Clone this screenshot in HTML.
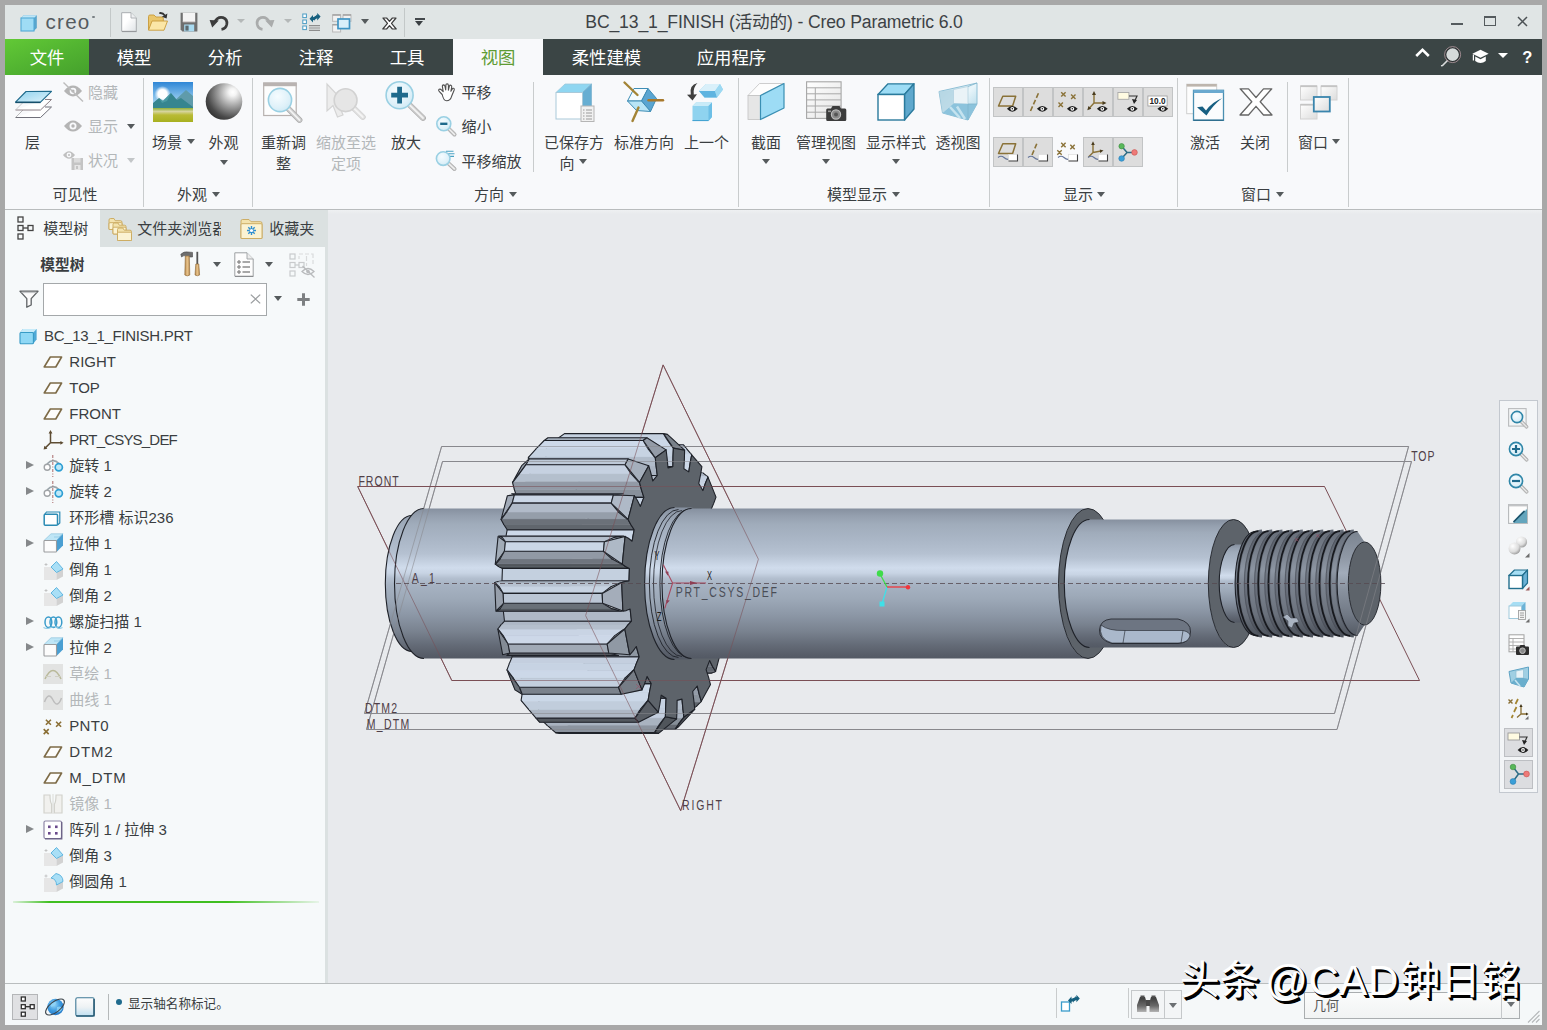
<!DOCTYPE html>
<html lang="zh-CN">
<head>
<meta charset="utf-8">
<title>BC_13_1_FINISH (活动的) - Creo Parametric 6.0</title>
<style>
html,body{margin:0;padding:0}
body{width:1547px;height:1030px;background:#a8a8a8;position:relative;overflow:hidden;
 font-family:"Liberation Sans","Noto Sans CJK SC",sans-serif;font-size:15px;color:#3a3e41;line-height:20px}
div,span,svg{position:absolute;box-sizing:border-box}
svg{overflow:visible}
.t{white-space:nowrap}
.c{white-space:nowrap;transform:translateX(-50%);text-align:center}
.dis{color:#b3b7b9}
#title{left:5px;top:5px;width:1537px;height:34px;background:#e0e5e5}
#tabs{left:5px;top:39px;width:1537px;height:36px;background:#3b4545}
#tabs .tb{color:#fff;font-size:17px;top:8px;line-height:20px;white-space:nowrap}
#ribbon{left:5px;top:75px;width:1537px;height:134px;background:#f8f9fb}
#ribline{left:5px;top:209px;width:1537px;height:1px;background:#b9bcbd}
.sep{width:1px;background:#c9cccd}
.arr{width:0;height:0;border-left:4px solid transparent;border-right:4px solid transparent;border-top:5px solid #555a5c}
.arr.d{border-top-color:#c3c6c8}
.tg{width:30px;height:30px}
.tg.on{background:#dddddd;border:1px solid #c2c4c5}
#ptabs{left:5px;top:210px;width:323px;height:37px;background:#dbe1e1}
#panel{left:5px;top:247px;width:320px;height:736px;background:#f6f9fa}
#sash{left:325px;top:247px;width:3px;height:736px;background:#dbe1e1}
#view{left:328px;top:210px;width:1214px;height:773px;background:#e8eaed}
#status{left:5px;top:983px;width:1537px;height:42px;background:#f5f8f9;border-top:1px solid #b9bdbe}
.row{left:0;width:320px;height:26px}
.row .t{top:3px;line-height:20px}
</style>
</head>
<body>
<div id="title"></div><div id="tabs"></div><div id="ribbon"></div><div id="ribline"></div>
<div id="view"></div>
<div id="ptabs"></div><div id="panel"></div><div id="sash"></div>
<div id="status"></div>
<svg style="left:20px;top:13.5px" width="18" height="18" viewBox="0 0 18 18"><path d="M1,4 L3.5,1.2 L16.8,1.2 L16.8,14 L14,16.8" fill="#5aa5cc"/><path d="M1,4 L3.5,1.2 L16.8,1.2 L14,4Z" fill="#bfe6f7"/><rect x="1" y="4" width="13" height="13" fill="#9fdcf5" stroke="#52aad6" stroke-width="1.1"/></svg>
<div class="t " style="left:45.5px;top:9.5px;font-size:20.6px;line-height:24px;color:#555b5f;letter-spacing:1.25px;">creo</div>
<div style="left:92.2px;top:15.5px;width:2.6px;height:2.6px;border-radius:2px;background:#7a8084"></div>
<div class="sep" style="left:110px;top:8px;height:29px;background:#c3c8c8"></div>
<svg style="left:121px;top:12px" width="16" height="20" viewBox="0 0 16 20"><defs><linearGradient id="ng1" x1="0" y1="0" x2="1" y2="1"><stop offset="0.4" stop-color="#fff"/><stop offset="1" stop-color="#dfe3e6"/></linearGradient></defs><path d="M0.7,0.7 H10 L15.3,6 V19.3 H0.7Z" fill="url(#ng1)" stroke="#a9adb0" stroke-width="1"/><path d="M10,0.7 V6 H15.3" fill="#eef0f2" stroke="#a9adb0" stroke-width="0.9"/><path d="M1,19.6 H15.6" stroke="#8e9295" stroke-width="0.9"/></svg>
<svg style="left:146.5px;top:11px" width="22" height="21" viewBox="0 0 22 21"><path d="M1.5,19 V5.5 Q1.5,4 3,4 H7 L9,6 H15 Q16.3,6 16.3,7.3 V10" fill="#e9c66c" stroke="#c79a3a" stroke-width="0.9"/><path d="M1.5,19.2 L5,10 H20.5 L17,19.2Z" fill="#fbe6a6" stroke="#c79a3a" stroke-width="0.9" stroke-linejoin="round"/><path d="M12.3,1.2 Q16.5,0.6 18.3,3.8 L20.4,2.6 L19.6,7.6 L14.8,5.8 L16.8,4.7 Q15.5,2.7 12.3,3.1Z" fill="#333"/></svg>
<svg style="left:180px;top:12px" width="18" height="20" viewBox="0 0 18 20"><path d="M0.6,0.8 H17.4 V19.4 H2.4 L0.6,17.6Z" fill="#6f6f6f"/><rect x="2.8" y="0.8" width="12.4" height="9" fill="#f4f4f4"/><path d="M2.8,9.8 H15.2" stroke="#d8d0d0" stroke-width="1"/><rect x="4.2" y="12.5" width="10" height="6.9" fill="#a9daf0"/><rect x="5.4" y="13.6" width="3.2" height="5" fill="#5d6a70"/></svg>
<svg style="left:209px;top:13.5px" width="19" height="17" viewBox="0 0 19 17"><path d="M5.5,8.5 Q8.5,2.2 14,3.6 Q18.6,5.2 17.8,10.3 Q17,14.6 12.5,15.3" fill="none" stroke="#3c3c3c" stroke-width="2.7"/><path d="M0.6,6 L9.8,6.6 L3.2,13.5Z" fill="#3c3c3c"/></svg>
<div style="left:237.0px;top:19.1px;width:0;height:0;border-left:4.0px solid transparent;border-right:4.0px solid transparent;border-top:4.5px solid #b4b8b8"></div>
<svg style="left:256px;top:13.5px" width="19" height="17" viewBox="0 0 19 17"><g transform="translate(19,0) scale(-1,1)"><path d="M5.5,8.5 Q8.5,2.2 14,3.6 Q18.6,5.2 17.8,10.3 Q17,14.6 12.5,15.3" fill="none" stroke="#a9abab" stroke-width="2.7"/><path d="M0.6,6 L9.8,6.6 L3.2,13.5Z" fill="#a9abab"/></g></svg>
<div style="left:284.0px;top:19.1px;width:0;height:0;border-left:4.0px solid transparent;border-right:4.0px solid transparent;border-top:4.5px solid #b4b8b8"></div>
<svg style="left:301.5px;top:11px" width="19" height="21" viewBox="0 0 19 21"><rect x="0.8" y="3" width="3.6" height="3.6" fill="#fff" stroke="#4a9cc4" stroke-width="1"/><rect x="0.8" y="9" width="3.6" height="3.6" fill="#fff" stroke="#4a9cc4" stroke-width="1"/><rect x="0.8" y="15" width="3.6" height="3.6" fill="#fff" stroke="#4a9cc4" stroke-width="1"/><path d="M7,17 H18 M7,19.4 H18 M7,14.6 H18" stroke="#8d8d8d" stroke-width="1.1"/><path d="M7.5,7.8 L11,4 L11,6.2 Q14,5.6 15,3.4 Q15.2,8.4 11,9.2 L11,11.4Z" fill="#16607f"/><path d="M18.6,5.2 L15.2,9 L15.2,6.8 Q12.6,7.6 12,9.6 Q11.4,4.6 15.2,3.8 L15.2,1.6Z" fill="#16607f" transform="translate(0,0.4)"/></svg>
<svg style="left:331.5px;top:13.5px" width="20" height="19" viewBox="0 0 20 19"><rect x="0.6" y="0.8" width="8" height="6.5" fill="#f2f2f2" stroke="#b9b9b9"/><rect x="11" y="0.8" width="8" height="6.5" fill="#f2f2f2" stroke="#b9b9b9"/><rect x="0.6" y="10.5" width="8" height="7.5" fill="#f2f2f2" stroke="#b9b9b9"/><path d="M0.6,1 H8.6 M11,1 H19 M0.6,10.7 H8.6" stroke="#a2a2a2" stroke-width="1.4"/><rect x="6" y="5" width="11.5" height="9.6" fill="#d9effa" stroke="#3f94c4" stroke-width="1.7"/></svg>
<div style="left:360.6px;top:19.0px;width:0;height:0;border-left:4.25px solid transparent;border-right:4.25px solid transparent;border-top:5.4px solid #555a5c"></div>
<svg style="left:382px;top:16.5px" width="15" height="13" viewBox="0 0 15 13"><path d="M1,1 H4.6 L7.5,4.4 L10.4,1 H14 L9.5,6.4 L14.2,12 H10.4 L7.5,8.6 L4.6,12 H0.8 L5.5,6.4Z" fill="#fff" stroke="#3a3a3a" stroke-width="1.2" stroke-linejoin="round"/></svg>
<div class="sep" style="left:404px;top:8px;height:29px;background:#c3c8c8"></div>
<div style="left:414.5px;top:18px;width:10px;height:1.6px;background:#44494c"></div>
<div style="left:414.8px;top:20.5px;width:0;height:0;border-left:4.75px solid transparent;border-right:4.75px solid transparent;border-top:5.6px solid #3a3f42"></div>
<div class="c " style="left:774px;top:10.0px;font-size:17.6px;line-height:24px;color:#3d4245;letter-spacing:-0.14px;">BC_13_1_FINISH (活动的) - Creo Parametric 6.0</div>
<div style="left:1451px;top:22.6px;width:11.5px;height:2px;background:#555b5e"></div>
<div style="left:1484px;top:16px;width:12.2px;height:10px;border:1.2px solid #555b5e;border-top:2.6px solid #555b5e"></div>
<svg style="left:1517px;top:16px" width="11" height="11" viewBox="0 0 11 11"><path d="M1,1 L10,10 M10,1 L1,10" stroke="#4c5255" stroke-width="1.5"/></svg>
<div style="left:5px;top:39px;width:84px;height:36px;background:linear-gradient(160deg,#62c936 0%,#52b431 50%,#45a02c 100%)"></div>
<div style="left:453px;top:39px;width:90px;height:37px;background:#f8f9fb"></div>
<div class="t " style="left:29.7px;top:46.7px;font-size:17.4px;line-height:22px;color:#fff;">文件</div>
<div class="t " style="left:116.7px;top:46.7px;font-size:17.4px;line-height:22px;color:#fff;">模型</div>
<div class="t " style="left:207.7px;top:46.7px;font-size:17.4px;line-height:22px;color:#fff;">分析</div>
<div class="t " style="left:298.7px;top:46.7px;font-size:17.4px;line-height:22px;color:#fff;">注释</div>
<div class="t " style="left:389.7px;top:46.7px;font-size:17.4px;line-height:22px;color:#fff;">工具</div>
<div class="t " style="left:480.7px;top:46.7px;font-size:17.4px;line-height:22px;color:#5f9c33;">视图</div>
<div class="t " style="left:571.7px;top:46.7px;font-size:17.4px;line-height:22px;color:#fff;">柔性建模</div>
<div class="t " style="left:696.7px;top:46.7px;font-size:17.4px;line-height:22px;color:#fff;">应用程序</div>
<svg style="left:1415px;top:47.5px" width="15" height="9" viewBox="0 0 15 9"><path d="M1.2,8 L7.5,1.8 L13.8,8" fill="none" stroke="#fff" stroke-width="2.6" stroke-linejoin="miter"/></svg>
<svg style="left:1439.5px;top:45.5px" width="22" height="22" viewBox="0 0 22 22"><path d="M8.5,13.5 L2.5,19.5 L1,19.8" stroke="#d9dcdc" stroke-width="1.6" fill="none"/><circle cx="12.6" cy="8.6" r="7" fill="#d5dada" stroke="#2d3334" stroke-width="1.4"/><circle cx="12.6" cy="8.6" r="8" fill="none" stroke="#c9a9b0" stroke-width="0.7"/></svg>
<svg style="left:1471.5px;top:48.5px" width="17" height="15" viewBox="0 0 17 15"><path d="M8.5,0.8 L16.6,4.8 L8.5,8.8 L0.4,4.8Z" fill="#fff"/><path d="M3.2,7.4 V12 Q8.5,15.8 13.8,12 V7.4 L8.5,10.2Z" fill="#fff"/><path d="M1.4,5.5 V11.5" stroke="#fff" stroke-width="1.2"/></svg>
<div style="left:1497.5px;top:53.0px;width:0;height:0;border-left:5.5px solid transparent;border-right:5.5px solid transparent;border-top:5.6px solid #fff"></div>
<div class="c " style="left:1527.3px;top:45.7px;font-size:16.5px;line-height:22px;color:#fff;font-weight:700;">?</div>
<svg style="left:14px;top:90px" width="40" height="30" viewBox="0 0 40 30"><defs><linearGradient id="lyg2" x1="0" y1="0" x2="1" y2="1"><stop offset="0" stop-color="#8fd2ee"/><stop offset="1" stop-color="#dff2fa"/></linearGradient></defs><path d="M1.5,27.5 L26.5,27.5 L37.5,17 L31,17" fill="#fff" stroke="#70707a" stroke-width="1"/><path d="M1.5,27.5 L12,17" stroke="#aaa" stroke-width="0.8"/><path d="M1.5,20 L26.5,20 L37.5,9.5 L31,9.5" fill="#fff" stroke="#8c8086" stroke-width="1"/><path d="M1.5,20 L12,9.5" stroke="#bbb" stroke-width="0.8"/><path d="M1.5,12.2 L12,1.5 L37.5,1.3 L26.5,12.2 Z" fill="url(#lyg2)" stroke="#1f6a8c" stroke-width="1.1" stroke-linejoin="round"/><path d="M1.5,12.4 L26.5,12.4" stroke="#174f6b" stroke-width="1.5"/></svg>
<div class="c " style="left:32.5px;top:133.0px;">层</div>
<svg style="left:62px;top:82px" width="22" height="20" viewBox="0 0 22 20"><path d="M2,9 Q11,-1.8000000000000007 20,9 Q11,19.8 2,9Z" fill="#b4b4b4"/><circle cx="11" cy="9" r="3.3" fill="#f8f9fb"/><circle cx="11" cy="9" r="1.6" fill="#b4b4b4"/><path d="M1.5,0.5 L21,19.5" stroke="#bcbcbc" stroke-width="1.4"/></svg>
<div class="t dis" style="left:88px;top:83.0px;">隐藏</div>
<svg style="left:63px;top:119px" width="20" height="14" viewBox="0 0 20 14"><path d="M1,7 Q10,-4.199999999999999 19,7 Q10,18.2 1,7Z" fill="#b4b4b4"/><circle cx="10" cy="7" r="3.5" fill="#f8f9fb"/><circle cx="10" cy="7" r="1.7" fill="#b4b4b4"/></svg>
<div class="t dis" style="left:88px;top:117.0px;">显示</div>
<div style="left:127.0px;top:123.8px;width:0;height:0;border-left:4.0px solid transparent;border-right:4.0px solid transparent;border-top:5px solid #555a5c"></div>
<svg style="left:62px;top:149px" width="22" height="22" viewBox="0 0 22 22"><path d="M1,6 Q7,-1.5999999999999996 13,6 Q7,13.6 1,6Z" fill="#c0c0c0"/><circle cx="7" cy="6" r="2.4" fill="#f8f9fb"/><circle cx="7" cy="6" r="1.1" fill="#c0c0c0"/><path d="M9.5,9 H21 V21 H9.5Z" fill="#c4c4c4"/><rect x="12" y="9" width="6.5" height="4.5" fill="#dcdcdc"/><rect x="12.5" y="16" width="6" height="5" fill="#e6e6e6"/><rect x="14" y="17" width="2" height="3" fill="#c4c4c4"/></svg>
<div class="t dis" style="left:88px;top:151.0px;">状况</div>
<div style="left:127.0px;top:157.8px;width:0;height:0;border-left:4.0px solid transparent;border-right:4.0px solid transparent;border-top:5px solid #c3c6c8"></div>
<div class="c " style="left:75px;top:184.5px;">可见性</div>
<div class="sep" style="left:143px;top:78px;height:129px;background:#c9cccd"></div>
<svg style="left:153px;top:82px" width="40" height="40" viewBox="0 0 40 40"><defs><linearGradient id="sky3" x1="0" y1="0" x2="0" y2="1"><stop offset="0" stop-color="#2f86d6"/><stop offset="0.5" stop-color="#7dbbe9"/><stop offset="1" stop-color="#c4e2f4"/></linearGradient><linearGradient id="gnd3" x1="0" y1="0" x2="0" y2="1"><stop offset="0" stop-color="#8fae3a"/><stop offset="0.25" stop-color="#d6d49c"/><stop offset="0.5" stop-color="#b9bb35"/><stop offset="1" stop-color="#a8b020"/></linearGradient><radialGradient id="sun3"><stop offset="0" stop-color="#fff"/><stop offset="0.55" stop-color="#fff"/><stop offset="1" stop-color="#fff" stop-opacity="0"/></radialGradient></defs><rect width="40" height="27" fill="url(#sky3)"/><circle cx="9.5" cy="12" r="8" fill="url(#sun3)"/><path d="M18,22 L33,8 L40,14 L40,26 L18,26Z" fill="#5f9bab"/><path d="M0,21 L6,16 L10,19 L18,11 L24,18 L28,16 L40,25 L40,27 L0,27Z" fill="#36858f"/><path d="M6,16 L10,19 L18,11 L14,19 L9,21Z" fill="#4a9aa2"/><rect y="26" width="40" height="14" fill="url(#gnd3)"/></svg>
<div class="t " style="left:152px;top:133.0px;">场景</div>
<div style="left:186.5px;top:139.3px;width:0;height:0;border-left:4.0px solid transparent;border-right:4.0px solid transparent;border-top:5px solid #555a5c"></div>
<svg style="left:204.5px;top:82px" width="38" height="38" viewBox="0 0 38 38"><defs><radialGradient id="sph4" cx="0.72" cy="0.28" r="0.85" fx="0.74" fy="0.24"><stop offset="0" stop-color="#fff"/><stop offset="0.12" stop-color="#f4f4f4"/><stop offset="0.45" stop-color="#a0a0a0"/><stop offset="0.8" stop-color="#4a4a4a"/><stop offset="1" stop-color="#2e2e2e"/></radialGradient></defs><circle cx="19" cy="19.5" r="18.3" fill="url(#sph4)"/></svg>
<div class="c " style="left:223.5px;top:133.0px;">外观</div>
<div style="left:220.0px;top:159.5px;width:0;height:0;border-left:4.0px solid transparent;border-right:4.0px solid transparent;border-top:5px solid #555a5c"></div>
<div class="t " style="left:177px;top:184.5px;">外观</div>
<div style="left:212.0px;top:191.5px;width:0;height:0;border-left:4.0px solid transparent;border-right:4.0px solid transparent;border-top:5px solid #555a5c"></div>
<div class="sep" style="left:252px;top:78px;height:129px;background:#c9cccd"></div>
<svg style="left:263px;top:82px" width="40" height="40" viewBox="0 0 40 40"><defs><radialGradient id="lens5" cx="0.4" cy="0.35" r="0.8"><stop offset="0" stop-color="#f6fcff"/><stop offset="0.6" stop-color="#dff1f9"/><stop offset="1" stop-color="#c7e6f3"/></radialGradient></defs><rect x="0.7" y="1" width="32.5" height="32.5" fill="#fdfdfd" stroke="#b7b1af" stroke-width="1.2"/><rect x="0.2" y="0.6" width="33.5" height="3.6" fill="#b9b3b1"/><path d="M25.4,26.7 L36.5,38" stroke="#a9a9a9" stroke-width="5.8" stroke-linecap="round"/><path d="M25.4,26.7 L36.5,38" stroke="#c9c9c9" stroke-width="4.6" stroke-linecap="round"/><path d="M25.4,26.7 L36.5,38" stroke="#f2f2f2" stroke-width="1.8" stroke-linecap="round"/><circle cx="17" cy="18" r="11.6" fill="url(#lens5)" stroke="#9ad0e3" stroke-width="1.6"/></svg>
<div class="c " style="left:283.5px;top:133.0px;">重新调</div>
<div class="c " style="left:283.5px;top:154.1px;">整</div>
<svg style="left:326px;top:82px" width="40" height="40" viewBox="0 0 40 40"><path d="M1,2 L1,29 L7,23.5 L11.5,35 L17,33 L12.5,21.5 L19,21Z" fill="#ececec" stroke="#d4d4d4" stroke-width="1.2"/><path d="M28.1,26.5 L36.8,35" stroke="#cfcfcf" stroke-width="5.8" stroke-linecap="round"/><path d="M28.1,26.5 L36.8,35" stroke="#dedede" stroke-width="4.6" stroke-linecap="round"/><path d="M28.1,26.5 L36.8,35" stroke="#f4f4f4" stroke-width="1.8" stroke-linecap="round"/><circle cx="19.6" cy="18.2" r="11.4" fill="#e6e6e6" stroke="#d2d2d2" stroke-width="1.6"/></svg>
<div class="c dis" style="left:346px;top:133.0px;">缩放至选</div>
<div class="c dis" style="left:346px;top:154.1px;">定项</div>
<svg style="left:385px;top:81px" width="40" height="40" viewBox="0 0 40 40"><defs><radialGradient id="lens6" cx="0.4" cy="0.35" r="0.8"><stop offset="0" stop-color="#f6fcff"/><stop offset="0.6" stop-color="#dff1f9"/><stop offset="1" stop-color="#c7e6f3"/></radialGradient></defs><path d="M24.6,24.0 L38,37" stroke="#a9a9a9" stroke-width="5.8" stroke-linecap="round"/><path d="M24.6,24.0 L38,37" stroke="#c9c9c9" stroke-width="4.6" stroke-linecap="round"/><path d="M24.6,24.0 L38,37" stroke="#f2f2f2" stroke-width="1.8" stroke-linecap="round"/><circle cx="14.6" cy="14.2" r="13.5" fill="url(#lens6)" stroke="#9ad0e3" stroke-width="1.6"/><path d="M6.2,14.2 H23 M14.6,5.8 V22.6" stroke="#1f6a8c" stroke-width="4.8"/></svg>
<div class="c " style="left:406px;top:133.0px;">放大</div>
<svg style="left:437.3px;top:83px" width="18" height="19" viewBox="0 0 18 19"><path d="M5.2,11.5 L2.4,8.6 Q1,7.2 2.2,6.3 Q3.3,5.6 4.6,7 L6.2,8.6 L5.4,3.6 Q5.2,2 6.5,1.9 Q7.7,1.9 8,3.4 L8.7,7 L8.9,2.3 Q9,0.8 10.2,0.9 Q11.4,1 11.4,2.5 L11.4,7.2 L12.4,3.2 Q12.8,1.9 13.9,2.2 Q15,2.6 14.7,4 L13.9,8.3 L15.3,5.9 Q16,4.8 16.9,5.4 Q17.7,6 17.1,7.3 L14.6,13.3 Q13.4,17.6 9.6,17.8 Q6.6,17.8 5.2,11.5Z" fill="#fff" stroke="#505050" stroke-width="1.1" stroke-linejoin="round"/></svg>
<div class="t " style="left:461.5px;top:83.0px;">平移</div>
<svg style="left:436px;top:116px" width="20" height="20" viewBox="0 0 20 20"><defs><radialGradient id="lens7" cx="0.4" cy="0.35" r="0.8"><stop offset="0" stop-color="#f6fcff"/><stop offset="0.6" stop-color="#dff1f9"/><stop offset="1" stop-color="#c7e6f3"/></radialGradient></defs><path d="M13.1,13.1 L18.5,18.5" stroke="#a9a9a9" stroke-width="4.0" stroke-linecap="round"/><path d="M13.1,13.1 L18.5,18.5" stroke="#c9c9c9" stroke-width="2.8" stroke-linecap="round"/><path d="M13.1,13.1 L18.5,18.5" stroke="#f2f2f2" stroke-width="1.1" stroke-linecap="round"/><circle cx="7.8" cy="7.8" r="7" fill="url(#lens7)" stroke="#9ad0e3" stroke-width="1.6"/><path d="M4.2,7.8 H11.4" stroke="#1f6a8c" stroke-width="2.4"/></svg>
<div class="t " style="left:461.5px;top:117.0px;">缩小</div>
<svg style="left:436px;top:149.5px" width="20" height="20" viewBox="0 0 20 20"><defs><radialGradient id="lens8" cx="0.4" cy="0.35" r="0.8"><stop offset="0" stop-color="#f6fcff"/><stop offset="0.6" stop-color="#dff1f9"/><stop offset="1" stop-color="#c7e6f3"/></radialGradient></defs><path d="M12.6,13.5 L18.5,19" stroke="#a9a9a9" stroke-width="4.0" stroke-linecap="round"/><path d="M12.6,13.5 L18.5,19" stroke="#c9c9c9" stroke-width="2.8" stroke-linecap="round"/><path d="M12.6,13.5 L18.5,19" stroke="#f2f2f2" stroke-width="1.1" stroke-linecap="round"/><circle cx="7.2" cy="8.6" r="6.8" fill="url(#lens8)" stroke="#9ad0e3" stroke-width="1.6"/><path d="M10,1.2 H17.5 M12.5,3.8 H18.5 M14.2,6.4 H18" stroke="#4aa3c4" stroke-width="1.1"/></svg>
<div class="t " style="left:461.5px;top:151.5px;">平移缩放</div>
<div class="sep" style="left:533px;top:82px;height:90px;background:#c9cccd"></div>
<svg style="left:555px;top:83px" width="40" height="40" viewBox="0 0 40 40"><path d="M1,9.5 L10,1 L36.5,1 L27.5,9.5Z" fill="#8fd6f1" stroke="#9cc9dd" stroke-width="0.8"/><path d="M27.5,9.5 L36.5,1 L36.5,27.5 L27.5,36Z" fill="#67aed2" stroke="#7fb5d0" stroke-width="0.8"/><rect x="1" y="9.5" width="26.5" height="26.5" fill="#fff" stroke="#a9c9d9" stroke-width="1"/><rect x="26" y="23" width="13" height="15.5" fill="#f1f1f1" stroke="#b5b5b5" stroke-width="1"/><path d="M28,27 h1.5 M31,27 h6 M28,30 h1.5 M31,30 h6 M28,33 h1.5 M31,33 h6 M28,36 h1.5 M31,36 h6" stroke="#9a9a9a" stroke-width="1"/></svg>
<div class="c " style="left:574px;top:133.0px;">已保存方</div>
<div class="c " style="left:567px;top:154.1px;">向</div>
<div style="left:579.0px;top:159.0px;width:0;height:0;border-left:4.0px solid transparent;border-right:4.0px solid transparent;border-top:5px solid #555a5c"></div>
<svg style="left:623px;top:81px" width="42" height="42" viewBox="0 0 42 42"><path d="M4.5,20 L11,7.5 L25,7.5 L18.5,20Z" fill="#f4fbfe" stroke="#3e8db5" stroke-width="1"/><path d="M18.5,20 L25,7.5 L33.5,17.5 L27.5,30.5Z" fill="#5aa5d1" stroke="#3e8db5" stroke-width="1"/><path d="M4.5,20 L18.5,20 L27.5,30.5 L13.5,29.5Z" fill="#b9e5f6" stroke="#3e8db5" stroke-width="1"/><path d="M1.5,1.5 L14.5,14" stroke="#a38436" stroke-width="2.4" stroke-linecap="round"/><path d="M25.5,19.3 L40,19.3" stroke="#a8792c" stroke-width="2.4" stroke-linecap="round"/><path d="M15.5,26.5 L9.5,40" stroke="#a38436" stroke-width="2.4" stroke-linecap="round"/></svg>
<div class="c " style="left:644px;top:133.0px;">标准方向</div>
<svg style="left:686px;top:82px" width="38" height="40" viewBox="0 0 38 40"><path d="M11.5,1 Q3,3 4.8,12.5 L1,12.8 L6.5,18.5 L11,12.2 L7.8,12.4 Q6.8,5.5 11.5,1Z" fill="#3f3f3f"/><path d="M13,9 L20,2 L34,2 L37,7.5 L31,15.5 L18.5,15.5Z" fill="#8fd3ef"/><path d="M13,9 L20,2 L34,2 L29,9Z" fill="#d9f0fa"/><path d="M13,9 L29,9 L31,15.5 L18.5,15.5Z" fill="#5fb4e0"/><path d="M29,9 L34,2 L37,7.5 L31,15.5Z" fill="#9dd9f2"/><path d="M6.5,24 L10,20.5 L26,20.5 L26,35 L22.5,39 L6.5,39Z" fill="#8fd3ef"/><path d="M6.5,24 L10,20.5 L26,20.5 L22.5,24Z" fill="#c9ebf8"/><path d="M22.5,24 L26,20.5 L26,35 L22.5,39Z" fill="#6dbfe6"/><path d="M6.5,38.6 H22.5" stroke="#3e9fcf" stroke-width="1"/></svg>
<div class="c " style="left:706.5px;top:133.0px;">上一个</div>
<div class="t " style="left:474px;top:184.5px;">方向</div>
<div style="left:509.0px;top:191.5px;width:0;height:0;border-left:4.0px solid transparent;border-right:4.0px solid transparent;border-top:5px solid #555a5c"></div>
<div class="sep" style="left:738px;top:78px;height:129px;background:#c9cccd"></div>
<svg style="left:747px;top:82px" width="38" height="38" viewBox="0 0 38 38"><path d="M1,13.5 L12.5,1.5 L37,1.5 L13.5,13.5Z" fill="#fdfdfd" stroke="#c2c2c2" stroke-width="0.8"/><rect x="1" y="13.5" width="12.5" height="24" fill="#e6e6e6" stroke="#c2c2c2" stroke-width="0.8"/><path d="M13.5,13.5 L37,1.5 L37,26 L13.5,37.5Z" fill="#9ddcf5" stroke="#3a8fb3" stroke-width="1.2" stroke-linejoin="round"/></svg>
<div class="c " style="left:766px;top:133.0px;">截面</div>
<div style="left:762.0px;top:159.0px;width:0;height:0;border-left:4.0px solid transparent;border-right:4.0px solid transparent;border-top:5px solid #555a5c"></div>
<svg style="left:806px;top:81px" width="41" height="41" viewBox="0 0 41 41"><defs><linearGradient id="tbl9" x1="0" y1="0" x2="1" y2="1"><stop offset="0" stop-color="#fff"/><stop offset="1" stop-color="#e4e4e4"/></linearGradient></defs><rect x="0.6" y="0.8" width="34.5" height="36.6" fill="url(#tbl9)" stroke="#a6a6a6" stroke-width="1.1"/><path d="M0.6,6.8 H35 M0.6,12.8 H35 M0.6,18.9 H35 M0.6,25 H35 M0.6,31.2 H35 M9.3,6.8 V37.4" stroke="#a9a9a9" stroke-width="1"/><path d="M21.5,27.5 H25 L26.5,25 H33.5 L35,27.5 H39 Q40.3,27.5 40.3,29 V38.5 Q40.3,40 39,40 H21.5 Q20.2,40 20.2,38.5 V29 Q20.2,27.5 21.5,27.5Z" fill="#3c3c3c"/><circle cx="30" cy="33.5" r="4.6" fill="#8a8a8a" stroke="#bdbdbd" stroke-width="1.2"/><circle cx="30" cy="33.5" r="2" fill="#555"/><rect x="22" y="29.5" width="3" height="1.6" fill="#9a9a9a"/></svg>
<div class="c " style="left:826px;top:133.0px;">管理视图</div>
<div style="left:822.0px;top:159.0px;width:0;height:0;border-left:4.0px solid transparent;border-right:4.0px solid transparent;border-top:5px solid #555a5c"></div>
<svg style="left:877px;top:82.5px" width="38" height="38" viewBox="0 0 38 38"><path d="M1,11.5 L11,0.8 L37,0.8 L27.5,11.5Z" fill="#9ddcf5" stroke="#2a7a9c" stroke-width="1.3" stroke-linejoin="round"/><path d="M27.5,11.5 L37,0.8 L37,26 L27.5,37Z" fill="#5fa8cd" stroke="#2a7a9c" stroke-width="1.3" stroke-linejoin="round"/><rect x="1" y="11.5" width="26.5" height="25.5" fill="#fff" stroke="#2a7a9c" stroke-width="1.4"/></svg>
<div class="c " style="left:896px;top:133.0px;">显示样式</div>
<div style="left:892.0px;top:159.0px;width:0;height:0;border-left:4.0px solid transparent;border-right:4.0px solid transparent;border-top:5px solid #555a5c"></div>
<svg style="left:938px;top:82px" width="40" height="40" viewBox="0 0 40 40"><defs><linearGradient id="psg10" x1="0" y1="0" x2="1" y2="1"><stop offset="0" stop-color="#b5d9e8"/><stop offset="0.5" stop-color="#e9f5fa"/><stop offset="1" stop-color="#9fcfe3"/></linearGradient></defs><path d="M1,9.5 L39,1 L39,22 L30,38 L4.5,31Z" fill="url(#psg10)" stroke="#8fc0d6" stroke-width="1"/><path d="M15.5,7.5 L30,4.5 L30,22 L15.5,21.5Z" fill="#eaf3f7" stroke="#b4d2df" stroke-width="0.8"/><path d="M1,9.5 L15.5,7.5 L15.5,21.5 L4.5,31Z" fill="#b3d4e2" fill-opacity="0.8"/><path d="M4.5,31 L15.5,21.5 L30,22 L39,22 L30,38Z" fill="#8cc3dc"/><path d="M12,25 L22,36 M19,24.5 L27,37" stroke="#c5e3ef" stroke-width="2.5"/><path d="M30,4.5 L39,1 M30,22 L39,22 M30,22 L30,38" stroke="#7fb4cc" stroke-width="0.8" fill="none"/></svg>
<div class="c " style="left:958px;top:133.0px;">透视图</div>
<div class="t " style="left:827px;top:184.5px;">模型显示</div>
<div style="left:892.0px;top:191.5px;width:0;height:0;border-left:4.0px solid transparent;border-right:4.0px solid transparent;border-top:5px solid #555a5c"></div>
<div class="sep" style="left:989px;top:78px;height:129px;background:#c9cccd"></div>
<div class="tg on" style="left:993px;top:87px"></div>
<svg style="left:993px;top:87px" width="30" height="30" viewBox="0 0 30 30"><path d="M5.5,19 L9.8,9.2 L22.7,9.2 L19.6,19Z" fill="none" stroke="#8a7238" stroke-width="1.5" stroke-linejoin="round"/><path d="M13.9,21.8 Q19.3,16.0 24.700000000000003,21.8 Q19.3,27.6 13.9,21.8Z" fill="#1e1e1e"/><circle cx="19.3" cy="21.8" r="1.9" fill="#fff"/><circle cx="19.3" cy="21.8" r="0.8" fill="#1e1e1e"/></svg>
<div class="tg on" style="left:1023px;top:87px"></div>
<svg style="left:1023px;top:87px" width="30" height="30" viewBox="0 0 30 30"><path d="M7.5,24 L16,5" stroke="#8a7238" stroke-width="1.6" stroke-dasharray="5,2.2"/><path d="M13.9,21.8 Q19.3,16.0 24.700000000000003,21.8 Q19.3,27.6 13.9,21.8Z" fill="#1e1e1e"/><circle cx="19.3" cy="21.8" r="1.9" fill="#fff"/><circle cx="19.3" cy="21.8" r="0.8" fill="#1e1e1e"/></svg>
<div class="tg on" style="left:1053px;top:87px"></div>
<svg style="left:1053px;top:87px" width="30" height="30" viewBox="0 0 30 30"><path d="M8.2,5.2 L12.600000000000001,9.600000000000001 M12.600000000000001,5.2 L8.2,9.600000000000001 M18.1,7.6000000000000005 L22.5,12.0 M22.5,7.6000000000000005 L18.1,12.0 M5.5,15.600000000000001 L9.9,20.0 M9.9,15.600000000000001 L5.5,20.0" stroke="#8a7238" stroke-width="1.4"/><path d="M13.9,21.8 Q19.3,16.0 24.700000000000003,21.8 Q19.3,27.6 13.9,21.8Z" fill="#1e1e1e"/><circle cx="19.3" cy="21.8" r="1.9" fill="#fff"/><circle cx="19.3" cy="21.8" r="0.8" fill="#1e1e1e"/></svg>
<div class="tg on" style="left:1083px;top:87px"></div>
<svg style="left:1083px;top:87px" width="30" height="30" viewBox="0 0 30 30"><path d="M11,16 L11,6.5 M11,16 L21,16 M11,16 L6,21.5" stroke="#8a7238" stroke-width="1.4" fill="none"/><path d="M11,4 L9,8 L13,8Z M23.5,16 L19.5,14 L19.5,18Z M4.3,23.2 L5.5,19 L8.3,21.8Z" fill="#4a3c1e"/><path d="M13.9,21.8 Q19.3,16.0 24.700000000000003,21.8 Q19.3,27.6 13.9,21.8Z" fill="#1e1e1e"/><circle cx="19.3" cy="21.8" r="1.9" fill="#fff"/><circle cx="19.3" cy="21.8" r="0.8" fill="#1e1e1e"/></svg>
<div class="tg on" style="left:1113px;top:87px"></div>
<svg style="left:1113px;top:87px" width="30" height="30" viewBox="0 0 30 30"><rect x="4.9" y="5.5" width="11" height="6.8" fill="#fffbe2" stroke="#a8a8a8" stroke-width="0.9"/><path d="M16,9 H24 L21.5,14.5" fill="none" stroke="#333" stroke-width="1.2"/><path d="M19,12 L24,13 L21,17Z" fill="#222"/><path d="M13.9,21.8 Q19.3,16.0 24.700000000000003,21.8 Q19.3,27.6 13.9,21.8Z" fill="#1e1e1e"/><circle cx="19.3" cy="21.8" r="1.9" fill="#fff"/><circle cx="19.3" cy="21.8" r="0.8" fill="#1e1e1e"/></svg>
<div class="tg on" style="left:1143px;top:87px"></div>
<svg style="left:1143px;top:87px" width="30" height="30" viewBox="0 0 30 30"><rect x="4.9" y="9" width="19.2" height="10" fill="#fff" stroke="#9a9a9a" stroke-width="0.8"/><text x="14.5" y="17" font-family="Liberation Sans, sans-serif" font-size="8.5" font-weight="700" text-anchor="middle" fill="#222" textLength="16" lengthAdjust="spacingAndGlyphs">10.0</text><path d="M14.4,21.8 Q19.8,16.0 25.200000000000003,21.8 Q19.8,27.6 14.4,21.8Z" fill="#1e1e1e"/><circle cx="19.8" cy="21.8" r="1.9" fill="#fff"/><circle cx="19.8" cy="21.8" r="0.8" fill="#1e1e1e"/></svg>
<div class="tg on" style="left:993px;top:137px"></div>
<svg style="left:993px;top:137px" width="30" height="30" viewBox="0 0 30 30"><path d="M5.5,16.5 L9.8,6.7 L22.7,6.7 L19.6,16.5Z" fill="none" stroke="#8a7238" stroke-width="1.5" stroke-linejoin="round"/><path d="M5,20.5 Q8,18 11,20.5 T16,22" fill="none" stroke="#66769a" stroke-width="1.2"/><rect x="15.5" y="17.5" width="9" height="6.5" fill="#fff" stroke="#d8d8d8" stroke-width="0.6"/><path d="M15.5,24 H24.5 V17.5" fill="none" stroke="#444" stroke-width="1.1"/></svg>
<div class="tg on" style="left:1023px;top:137px"></div>
<svg style="left:1023px;top:137px" width="30" height="30" viewBox="0 0 30 30"><path d="M9,18 L14.5,5" stroke="#8a7238" stroke-width="1.6" stroke-dasharray="5,2.2"/><path d="M5,20.5 Q8,18 11,20.5 T16,22" fill="none" stroke="#66769a" stroke-width="1.2"/><rect x="15.5" y="17.5" width="9" height="6.5" fill="#fff" stroke="#d8d8d8" stroke-width="0.6"/><path d="M15.5,24 H24.5 V17.5" fill="none" stroke="#444" stroke-width="1.1"/></svg>
<svg style="left:1053px;top:137px" width="30" height="30" viewBox="0 0 30 30"><path d="M8.2,5.8 L12.600000000000001,10.2 M12.600000000000001,5.8 L8.2,10.2 M17.3,7.8 L21.7,12.2 M21.7,7.8 L17.3,12.2 M4.3,13.3 L8.7,17.7 M8.7,13.3 L4.3,17.7" stroke="#8a7238" stroke-width="1.4"/><path d="M5,20.5 Q8,18 11,20.5 T16,22" fill="none" stroke="#66769a" stroke-width="1.2"/><rect x="15.5" y="17.5" width="9" height="6.5" fill="#fff" stroke="#d8d8d8" stroke-width="0.6"/><path d="M15.5,24 H24.5 V17.5" fill="none" stroke="#444" stroke-width="1.1"/></svg>
<div class="tg on" style="left:1083px;top:137px"></div>
<svg style="left:1083px;top:137px" width="30" height="30" viewBox="0 0 30 30"><path d="M10,15.5 L10,6.5 M10,15.5 L18,14 M10,15.5 L5.5,20" stroke="#8a7238" stroke-width="1.4" fill="none"/><path d="M10,4.2 L8.2,8 L11.8,8Z M20.5,13.6 L16.8,12.4 L17.2,16Z" fill="#4a3c1e"/><path d="M5,20.5 Q8,18 11,20.5 T16,22" fill="none" stroke="#66769a" stroke-width="1.2"/><rect x="15.5" y="17.5" width="9" height="6.5" fill="#fff" stroke="#d8d8d8" stroke-width="0.6"/><path d="M15.5,24 H24.5 V17.5" fill="none" stroke="#444" stroke-width="1.1"/></svg>
<div class="tg on" style="left:1113px;top:137px"></div>
<svg style="left:1113px;top:137px" width="30" height="30" viewBox="0 0 30 30"><path d="M8.6,9.2 L14.1,15.4 L21.5,15.4 M14.1,15.4 L8.6,21.5" stroke="#2c6c86" stroke-width="1.5" fill="none"/><circle cx="8.6" cy="9.2" r="2.7" fill="#58b85a" stroke="#3d8a3f" stroke-width="0.6"/><circle cx="21.5" cy="15.4" r="2.8" fill="#ee7a78" stroke="#c75553" stroke-width="0.6"/><circle cx="8.6" cy="21.5" r="2.8" fill="#3a9fd8" stroke="#2a7cb0" stroke-width="0.6"/></svg>
<div class="t " style="left:1063px;top:184.5px;">显示</div>
<div style="left:1097.0px;top:191.5px;width:0;height:0;border-left:4.0px solid transparent;border-right:4.0px solid transparent;border-top:5px solid #555a5c"></div>
<div class="sep" style="left:1177px;top:78px;height:129px;background:#c9cccd"></div>
<svg style="left:1186px;top:82.5px" width="39" height="39" viewBox="0 0 39 39"><rect x="0.7" y="1.2" width="30" height="29.5" fill="#fdfdfd" stroke="#cfcfcf" stroke-width="1"/><rect x="0.7" y="1" width="30" height="2.6" fill="#bdb5ad"/><rect x="7.5" y="7.3" width="30" height="30" fill="#fbfcfd" stroke="#4a8fb1" stroke-width="1.3"/><rect x="7.5" y="7" width="30" height="3" fill="#6aa9cf"/><path d="M7.5,37.3 H37.5" stroke="#2f6f8f" stroke-width="1.4"/><path d="M11,24.3 L16.5,23.6 L20,27.5 Q26,19 36,15.2 Q27,22 20.5,32.5Z" fill="#175f82"/></svg>
<div class="c " style="left:1205px;top:133.0px;">激活</div>
<svg style="left:1238.7px;top:86.8px" width="34" height="30" viewBox="0 0 34 30"><path d="M1.2,1.8 H9.5 L17,10.5 L24.5,1.8 H32.8 L21.2,14.8 L33,28 H24.5 L17,19.3 L9.5,28 H1 L12.8,14.8Z" fill="#fff" stroke="#666" stroke-width="1.3" stroke-linejoin="round"/></svg>
<div class="c " style="left:1255px;top:133.0px;">关闭</div>
<div class="sep" style="left:1287px;top:82px;height:90px;background:#c9cccd"></div>
<svg style="left:1300px;top:85px" width="38" height="35" viewBox="0 0 38 35"><defs><linearGradient id="wg11" x1="0" y1="0" x2="1" y2="1"><stop offset="0" stop-color="#fff"/><stop offset="1" stop-color="#dcdcdc"/></linearGradient></defs><rect x="0.5" y="1" width="16.5" height="14" fill="url(#wg11)" stroke="#d2d2d2"/><rect x="0.5" y="0.3" width="16.5" height="1.8" fill="#c4c4c4"/><rect x="21" y="1" width="16" height="14" fill="url(#wg11)" stroke="#d2d2d2"/><rect x="21" y="0.3" width="16" height="1.8" fill="#c4c4c4"/><rect x="0.5" y="19.5" width="16.5" height="14.5" fill="url(#wg11)" stroke="#d2d2d2"/><rect x="0.5" y="18.8" width="16.5" height="1.8" fill="#c4c4c4"/><rect x="13.8" y="12" width="16" height="14.5" fill="url(#wg11)" stroke="#3a85ad" stroke-width="1.8"/></svg>
<div class="t " style="left:1298px;top:133.0px;">窗口</div>
<div style="left:1332.0px;top:139.3px;width:0;height:0;border-left:4.0px solid transparent;border-right:4.0px solid transparent;border-top:5px solid #555a5c"></div>
<div class="t " style="left:1241px;top:184.5px;">窗口</div>
<div style="left:1276.0px;top:191.5px;width:0;height:0;border-left:4.0px solid transparent;border-right:4.0px solid transparent;border-top:5px solid #555a5c"></div>
<div class="sep" style="left:1348px;top:78px;height:129px;background:#c9cccd"></div>
<div style="left:5px;top:210px;width:94.5px;height:37px;background:#f6f9fa"></div>
<svg style="left:16px;top:215.5px" width="18" height="24" viewBox="0 0 18 24"><g fill="none" stroke="#444" stroke-width="1.3"><rect x="2" y="1" width="5" height="5"/><rect x="2" y="9.5" width="5" height="5"/><rect x="2" y="18" width="5" height="5"/><rect x="12" y="9.5" width="5" height="5"/><path d="M7,12 H12"/></g></svg>
<div class="t " style="left:43.3px;top:219.0px;">模型树</div>
<svg style="left:108px;top:216.5px" width="25" height="25" viewBox="0 0 25 25"><path d="M1,12.5 V3.0 Q1,1.5 2.5,1.5 H5.94 L7.24,3.7 H12.5 Q14,3.7 14,5.2 V12.5Z" fill="#f3e3ae" stroke="#c9a85c" stroke-width="0.9"/><rect x="1" y="5.7" width="13" height="6.8" rx="1" fill="#fbf3d3" stroke="#c9a85c" stroke-width="0.9"/><path d="M5,17 V7.5 Q5,6 6.5,6 H9.940000000000001 L11.24,8.2 H16.5 Q18,8.2 18,9.7 V17Z" fill="#f3e3ae" stroke="#c9a85c" stroke-width="0.9"/><rect x="5" y="10.2" width="13" height="6.8" rx="1" fill="#fbf3d3" stroke="#c9a85c" stroke-width="0.9"/><path d="M9.5,23.5 V12.5 Q9.5,11 11.0,11 H14.82 L16.22,13.2 H22.0 Q23.5,13.2 23.5,14.7 V23.5Z" fill="#f3e3ae" stroke="#c9a85c" stroke-width="0.9"/><rect x="9.5" y="15.2" width="14" height="8.3" rx="1" fill="#fbf3d3" stroke="#c9a85c" stroke-width="0.9"/></svg>
<div class="t " style="left:137.2px;top:219.0px;width:83.5px;overflow:hidden;">文件夹浏览器</div>
<svg style="left:240px;top:218px" width="24" height="22" viewBox="0 0 24 22"><path d="M1,20.5 V3.0 Q1,1.5 2.5,1.5 H8.98 L11.08,3.7 H20.5 Q22,3.7 22,5.2 V20.5Z" fill="#f3e3ae" stroke="#c9a85c" stroke-width="0.9"/><rect x="1" y="5.7" width="21" height="14.8" rx="1" fill="#fbf3d3" stroke="#c9a85c" stroke-width="0.9"/><path d="M11.5,8 V17 M7,12.5 H16 M8.3,9.3 L14.7,15.7 M14.7,9.3 L8.3,15.7" stroke="#2f8fd0" stroke-width="1.4"/><circle cx="11.5" cy="12.5" r="1.6" fill="#fff"/></svg>
<div class="t " style="left:269.3px;top:219.0px;">收藏夹</div>
<div class="t " style="left:40.3px;top:255.1px;font-size:14.7px;font-weight:700;">模型树</div>
<svg style="left:180px;top:251.3px" width="22" height="26" viewBox="0 0 22 26"><defs><linearGradient id="wd12" x1="0" y1="0" x2="1" y2="0"><stop offset="0" stop-color="#b98a4e"/><stop offset="0.5" stop-color="#e8c48c"/><stop offset="1" stop-color="#b98a4e"/></linearGradient></defs><path d="M0.8,3.2 Q4,0.2 8,1 L12.5,1.4 V6 H9.6 V4.6 H5 Q3,4.6 1.6,6Z" fill="#6e6e6e" stroke="#4a4a4a" stroke-width="0.6"/><path d="M5.3,5 H9.3 L9.8,24 Q7.3,25.8 4.8,24Z" fill="url(#wd12)" stroke="#8a6534" stroke-width="0.6"/><path d="M17.3,0.8 V13" stroke="#555" stroke-width="1.8"/><path d="M15.8,13 H18.8 L19.6,24 Q17.3,25.6 15,24Z" fill="url(#wd12)" stroke="#8a6534" stroke-width="0.6"/></svg>
<div style="left:213.0px;top:262.0px;width:0;height:0;border-left:4.2px solid transparent;border-right:4.2px solid transparent;border-top:5px solid #555a5c"></div>
<svg style="left:233.5px;top:252px" width="20" height="25" viewBox="0 0 20 25"><path d="M0.8,0.8 H13 L19.2,7 V24.2 H0.8Z" fill="#fdfdfd" stroke="#9da0a3" stroke-width="1"/><path d="M13,0.8 V7 H19.2" fill="#ececec" stroke="#9da0a3" stroke-width="0.9"/><circle cx="5" cy="10" r="1.2" fill="none" stroke="#555" stroke-width="0.9"/><circle cx="5" cy="15" r="1.2" fill="none" stroke="#555" stroke-width="0.9"/><circle cx="5" cy="20" r="1.2" fill="none" stroke="#555" stroke-width="0.9"/><path d="M8.5,10 H16 M8.5,15 H16 M8.5,20 H16" stroke="#555" stroke-width="1.1"/><path d="M1,24.5 H19.4" stroke="#7d8083" stroke-width="0.8"/></svg>
<div style="left:265.0px;top:262.0px;width:0;height:0;border-left:4.2px solid transparent;border-right:4.2px solid transparent;border-top:5px solid #555a5c"></div>
<svg style="left:288.5px;top:252.5px" width="27" height="25" viewBox="0 0 27 25"><g fill="none" stroke="#c9cbcd" stroke-width="1.2"><rect x="1" y="1" width="5" height="5"/><rect x="1" y="9.5" width="5" height="5"/><rect x="1" y="18" width="5" height="5"/><rect x="10" y="9.5" width="5" height="5"/><path d="M6,12 H10"/><path d="M10,1 H14 M16,1 H20 M22,1 H24 V5 M24,7 V11 M10,3 V6 M17.5,3 V8 M17.5,10 V13" stroke-dasharray="none" stroke="#d9dbdc"/></g><path d="M13,18.5 Q19,12.5 25,18.5 Q19,24.5 13,18.5Z" fill="none" stroke="#b9bbbd" stroke-width="1.3"/><circle cx="19" cy="18.5" r="1.8" fill="#b9bbbd"/><path d="M13.5,13 L25.5,24.5" stroke="#b9bbbd" stroke-width="1.3"/></svg>
<svg style="left:19px;top:290px" width="20" height="18" viewBox="0 0 20 18"><path d="M1,1.2 H19 L12.2,8.6 V15 L7.8,17.2 V8.6Z" fill="#fbfbfb" stroke="#5f6365" stroke-width="1.3" stroke-linejoin="round"/><path d="M2.5,2.6 H17.5" stroke="#bfc2c4" stroke-width="1"/></svg>
<div style="left:43px;top:282.5px;width:224px;height:33px;background:#fff;border:1px solid #a4a8aa"></div>
<svg style="left:249.5px;top:294px" width="11" height="10" viewBox="0 0 11 10"><path d="M0.8,0.6 L10.2,9.4 M10.2,0.6 L0.8,9.4" stroke="#9b9ea0" stroke-width="1.3"/></svg>
<div style="left:274.0px;top:296.2px;width:0;height:0;border-left:4.2px solid transparent;border-right:4.2px solid transparent;border-top:5px solid #555a5c"></div>
<svg style="left:297.2px;top:292.5px" width="13" height="13" viewBox="0 0 13 13"><path d="M6.5,0.3 V12.7 M0.3,6.5 H12.7" stroke="#7d8082" stroke-width="3"/></svg>
<svg style="left:19.3px;top:327.7px" width="19" height="17" viewBox="0 0 19 17"><path d="M1,4.5 L4,1 H17.6 V11.5 L14.4,15.6" fill="#4fa9d6"/><path d="M1,4.5 L4,1 H17.6 L14.4,4.5Z" fill="#c7ebf9"/><rect x="1" y="4.5" width="13.4" height="11.3" rx="1" fill="#8fd8f5" stroke="#379bc6" stroke-width="1.1"/></svg>
<div class="t " style="left:44px;top:326.0px;letter-spacing:-0.3px;">BC_13_1_FINISH.PRT</div>
<svg style="left:42.7px;top:356.2px" width="20" height="12" viewBox="0 0 20 12"><path d="M1.2,11 L7.3,1 L18.6,1 L12.8,11Z" fill="#fdfdfb" stroke="#7d6b47" stroke-width="1.6" stroke-linejoin="round"/></svg>
<div class="t " style="left:69.3px;top:352.0px;">RIGHT</div>
<svg style="left:42.7px;top:382.2px" width="20" height="12" viewBox="0 0 20 12"><path d="M1.2,11 L7.3,1 L18.6,1 L12.8,11Z" fill="#fdfdfb" stroke="#7d6b47" stroke-width="1.6" stroke-linejoin="round"/></svg>
<div class="t " style="left:69.3px;top:378.0px;">TOP</div>
<svg style="left:42.7px;top:408.2px" width="20" height="12" viewBox="0 0 20 12"><path d="M1.2,11 L7.3,1 L18.6,1 L12.8,11Z" fill="#fdfdfb" stroke="#7d6b47" stroke-width="1.6" stroke-linejoin="round"/></svg>
<div class="t " style="left:69.3px;top:404.0px;">FRONT</div>
<svg style="left:42.6px;top:429.5px" width="21" height="20" viewBox="0 0 21 20"><path d="M7.5,2 V12.8 H19 M7.5,12.8 L1.8,18.4" fill="none" stroke="#5e4d33" stroke-width="1.5"/><path d="M7.5,0 L5.6,3.4 H9.4Z M20.6,12.8 L17.4,10.9 V14.7Z M0.6,19.6 L1.4,15.8 L4.4,18.8Z" fill="#5e4d33"/></svg>
<div class="t " style="left:69.3px;top:430.0px;letter-spacing:-0.8px;">PRT_CSYS_DEF</div>
<svg style="left:42.6px;top:455.0px" width="21" height="22" viewBox="0 0 21 22"><path d="M4,9 Q10,2.5 16,8.5" fill="none" stroke="#9aa5ab" stroke-width="1.6"/><circle cx="4.2" cy="12.3" r="3" fill="#fff" stroke="#a0a4a7" stroke-width="1.4"/><circle cx="15.8" cy="12.3" r="3.6" fill="#bfe8f8" stroke="#2f9fd3" stroke-width="1.7"/><path d="M9.8,0 V22" stroke="#a05a5a" stroke-width="0.9" stroke-dasharray="3,1.5,1,1.5"/></svg>
<div style="left:25.5px;top:460.7px;width:0;height:0;border-top:4.8px solid transparent;border-bottom:4.8px solid transparent;border-left:8px solid #85888a"></div>
<div class="t " style="left:69.3px;top:456.0px;">旋转 1</div>
<svg style="left:42.6px;top:481.0px" width="21" height="22" viewBox="0 0 21 22"><path d="M4,9 Q10,2.5 16,8.5" fill="none" stroke="#9aa5ab" stroke-width="1.6"/><circle cx="4.2" cy="12.3" r="3" fill="#fff" stroke="#a0a4a7" stroke-width="1.4"/><circle cx="15.8" cy="12.3" r="3.6" fill="#bfe8f8" stroke="#2f9fd3" stroke-width="1.7"/><path d="M9.8,0 V22" stroke="#a05a5a" stroke-width="0.9" stroke-dasharray="3,1.5,1,1.5"/></svg>
<div style="left:25.5px;top:486.7px;width:0;height:0;border-top:4.8px solid transparent;border-bottom:4.8px solid transparent;border-left:8px solid #85888a"></div>
<div class="t " style="left:69.3px;top:482.0px;">旋转 2</div>
<svg style="left:43px;top:510.7px" width="18" height="15" viewBox="0 0 18 15"><path d="M1.5,3.5 L3.5,1 H16.8 V12 L14.5,14" fill="none" stroke="#2b8bb4" stroke-width="1.2"/><rect x="1.2" y="3.2" width="13.3" height="11" rx="1" fill="#fff" stroke="#2b8bb4" stroke-width="1.5"/></svg>
<div class="t " style="left:69.3px;top:508.0px;">环形槽 标识236</div>
<svg style="left:42.5px;top:533.3px" width="21" height="20" viewBox="0 0 21 20"><path d="M1,7.5 L8,0.8 H20 L13.5,7.5Z" fill="#bfe6f6" stroke="#8fc4dd" stroke-width="0.7"/><path d="M13.5,7.5 L20,0.8 V12.5 L13.5,19Z" fill="#4a9fd2"/><path d="M11,4 L16,4 L20,0.8" fill="none" stroke="#7cc0e0" stroke-width="0.6"/><rect x="1" y="7.5" width="12.5" height="11.5" rx="0.8" fill="#fcfcfc" stroke="#9a9c9e" stroke-width="1.1"/></svg>
<div style="left:25.5px;top:538.7px;width:0;height:0;border-top:4.8px solid transparent;border-bottom:4.8px solid transparent;border-left:8px solid #85888a"></div>
<div class="t " style="left:69.3px;top:534.0px;">拉伸 1</div>
<svg style="left:43px;top:559.7px" width="21" height="21" viewBox="0 0 21 21"><path d="M1,7 H8 L13.5,12.5 V20 H1Z" fill="#e6e6e6"/><path d="M13.5,12.5 L20,9 V16.5 L13.5,20Z" fill="#d2d2d2"/><path d="M8,7 L13.5,1.5 L20,9 L13.5,12.5Z" fill="#a9dff6" stroke="#55b0dc" stroke-width="0.9" stroke-linejoin="round"/><path d="M3,3 V6 M1.5,4.5 H4.5" stroke="#b5b5b5" stroke-width="0.7"/></svg>
<div class="t " style="left:69.3px;top:560.0px;">倒角 1</div>
<svg style="left:43px;top:585.7px" width="21" height="21" viewBox="0 0 21 21"><path d="M1,7 H8 L13.5,12.5 V20 H1Z" fill="#e6e6e6"/><path d="M13.5,12.5 L20,9 V16.5 L13.5,20Z" fill="#d2d2d2"/><path d="M8,7 L13.5,1.5 L20,9 L13.5,12.5Z" fill="#a9dff6" stroke="#55b0dc" stroke-width="0.9" stroke-linejoin="round"/><path d="M3,3 V6 M1.5,4.5 H4.5" stroke="#b5b5b5" stroke-width="0.7"/></svg>
<div class="t " style="left:69.3px;top:586.0px;">倒角 2</div>
<svg style="left:43px;top:616.0px" width="20" height="14" viewBox="0 0 20 14"><g fill="none" stroke="#3a9ccb" stroke-width="1.5"><ellipse cx="5.4" cy="6.2" rx="3.4" ry="5.2"/><ellipse cx="10.4" cy="6.2" rx="3.4" ry="5.2"/><ellipse cx="15.4" cy="6.2" rx="3.4" ry="5.2"/><path d="M0.5,11.5 Q4,13.5 8,11.5 T14,11.5 T19.5,11.5" stroke="#8cc9e4" stroke-width="1.1"/></g></svg>
<div style="left:25.5px;top:616.7px;width:0;height:0;border-top:4.8px solid transparent;border-bottom:4.8px solid transparent;border-left:8px solid #85888a"></div>
<div class="t " style="left:69.3px;top:612.0px;">螺旋扫描 1</div>
<svg style="left:42.5px;top:637.3px" width="21" height="20" viewBox="0 0 21 20"><path d="M1,7.5 L8,0.8 H20 L13.5,7.5Z" fill="#bfe6f6" stroke="#8fc4dd" stroke-width="0.7"/><path d="M13.5,7.5 L20,0.8 V12.5 L13.5,19Z" fill="#4a9fd2"/><path d="M11,4 L16,4 L20,0.8" fill="none" stroke="#7cc0e0" stroke-width="0.6"/><rect x="1" y="7.5" width="12.5" height="11.5" rx="0.8" fill="#fcfcfc" stroke="#9a9c9e" stroke-width="1.1"/></svg>
<div style="left:25.5px;top:642.7px;width:0;height:0;border-top:4.8px solid transparent;border-bottom:4.8px solid transparent;border-left:8px solid #85888a"></div>
<div class="t " style="left:69.3px;top:638.0px;">拉伸 2</div>
<svg style="left:43px;top:664.0px" width="20" height="20" viewBox="0 0 20 20"><rect width="20" height="20" fill="#e2e3e2"/><path d="M2,15 Q10,-2 18,15" fill="none" stroke="#b9b99a" stroke-width="1.5"/><path d="M3,12.5 L8,12.5 M12,12.5 L17,12.5" stroke="#cfcfc4" stroke-width="1"/></svg>
<div class="t dis" style="left:69.3px;top:664.0px;">草绘 1</div>
<svg style="left:43px;top:690.0px" width="20" height="20" viewBox="0 0 20 20"><rect width="20" height="20" fill="#e2e3e2"/><path d="M1.5,12 Q5.5,1 10,10 T18.5,8" fill="none" stroke="#bdbdbd" stroke-width="1.5"/></svg>
<div class="t dis" style="left:69.3px;top:690.0px;">曲线 1</div>
<svg style="left:43px;top:718.3px" width="20" height="17" viewBox="0 0 20 17"><path d="M2.9000000000000004,1.7000000000000002 L7.9,6.7 M7.9,1.7000000000000002 L2.9000000000000004,6.7 M13.1,3.7 L18.1,8.7 M18.1,3.7 L13.1,8.7 M0.7000000000000002,11.1 L5.7,16.1 M5.7,11.1 L0.7000000000000002,16.1" stroke="#8a6f35" stroke-width="1.6"/></svg>
<div class="t " style="left:69.3px;top:716.0px;letter-spacing:0.3px;">PNT0</div>
<svg style="left:42.7px;top:746.2px" width="20" height="12" viewBox="0 0 20 12"><path d="M1.2,11 L7.3,1 L18.6,1 L12.8,11Z" fill="#fdfdfb" stroke="#7d6b47" stroke-width="1.6" stroke-linejoin="round"/></svg>
<div class="t " style="left:69.3px;top:742.0px;letter-spacing:0.8px;">DTM2</div>
<svg style="left:42.7px;top:772.2px" width="20" height="12" viewBox="0 0 20 12"><path d="M1.2,11 L7.3,1 L18.6,1 L12.8,11Z" fill="#fdfdfb" stroke="#7d6b47" stroke-width="1.6" stroke-linejoin="round"/></svg>
<div class="t " style="left:69.3px;top:768.0px;letter-spacing:0.8px;">M_DTM</div>
<svg style="left:43.3px;top:793.8px" width="20" height="20" viewBox="0 0 20 20"><path d="M1,1 H7 Q7,8 8.6,10 V19 H1Z M19,1 H13 Q13,8 11.4,10 V19 H19Z" fill="#f1f1ee" stroke="#d2d2cc" stroke-width="1.2"/><path d="M10,0 V20" stroke="#d8d8d2" stroke-width="0.9"/></svg>
<div class="t dis" style="left:69.3px;top:794.0px;">镜像 1</div>
<svg style="left:43.2px;top:819.7px" width="20" height="20" viewBox="0 0 20 20"><rect x="1" y="1" width="17.5" height="17.5" rx="1.5" fill="#fff" stroke="#8d85a6" stroke-width="1.2"/><path d="M18.7,2 V18.7 H2" fill="none" stroke="#6d6488" stroke-width="1.4"/><g fill="#6a4a8c"><rect x="5" y="5.5" width="2.6" height="2.6"/><rect x="12" y="5.5" width="2.6" height="2.6"/><rect x="5" y="12" width="2.6" height="2.6"/><rect x="12" y="12" width="2.6" height="2.6"/></g></svg>
<div style="left:25.5px;top:824.7px;width:0;height:0;border-top:4.8px solid transparent;border-bottom:4.8px solid transparent;border-left:8px solid #85888a"></div>
<div class="t " style="left:69.3px;top:820.0px;">阵列 1 / 拉伸 3</div>
<svg style="left:43px;top:845.7px" width="21" height="21" viewBox="0 0 21 21"><path d="M1,7 H8 L13.5,12.5 V20 H1Z" fill="#e6e6e6"/><path d="M13.5,12.5 L20,9 V16.5 L13.5,20Z" fill="#d2d2d2"/><path d="M8,7 L13.5,1.5 L20,9 L13.5,12.5Z" fill="#a9dff6" stroke="#55b0dc" stroke-width="0.9" stroke-linejoin="round"/><path d="M3,3 V6 M1.5,4.5 H4.5" stroke="#b5b5b5" stroke-width="0.7"/></svg>
<div class="t " style="left:69.3px;top:846.0px;">倒角 3</div>
<svg style="left:43px;top:871.5px" width="21" height="21" viewBox="0 0 21 21"><path d="M1,6 H8 Q13.5,7 13.5,13 V20 H1Z" fill="#e6e6e6"/><path d="M13.5,13 L20,9.5 V16.5 L13.5,20Z" fill="#d2d2d2"/><path d="M8,6 L13,1.5 Q20,3 20,9.5 L13.5,13 Q13.5,7 8,6Z" fill="#a9dff6" stroke="#55b0dc" stroke-width="0.9" stroke-linejoin="round"/><path d="M3,2.5 V5.5 M1.5,4 H4.5" stroke="#b5b5b5" stroke-width="0.7"/></svg>
<div class="t " style="left:69.3px;top:872.0px;">倒圆角 1</div>
<div style="left:13px;top:901px;width:306px;height:2px;background:linear-gradient(90deg,rgba(63,191,32,0.15),#3fbf20 12%,#3fbf20 70%,rgba(63,191,32,0.08))"></div>
<div style="left:328px;top:210px;width:1214px;height:4px;background:linear-gradient(180deg,#eef0f2,#e8eaed)"></div>
<svg id="model" style="left:328px;top:210px" width="1214" height="773" viewBox="328 210 1214 773"><defs><linearGradient id="g75" gradientUnits="userSpaceOnUse" x1="0" y1="508.5" x2="0" y2="658.5"><stop offset="0" stop-color="#86909f"/><stop offset="0.05" stop-color="#95a0af"/><stop offset="0.105" stop-color="#a0acbb"/><stop offset="0.215" stop-color="#abb7c7"/><stop offset="0.3" stop-color="#b5c1d1"/><stop offset="0.36" stop-color="#c6d2e2"/><stop offset="0.395" stop-color="#d0dcec"/><stop offset="0.43" stop-color="#c8d4e4"/><stop offset="0.465" stop-color="#b3bfcf"/><stop offset="0.51" stop-color="#a6b2c2"/><stop offset="0.6" stop-color="#9da9b8"/><stop offset="0.71" stop-color="#8c97a6"/><stop offset="0.82" stop-color="#79828f"/><stop offset="0.91" stop-color="#646b77"/><stop offset="0.97" stop-color="#585e69"/><stop offset="1" stop-color="#535964"/></linearGradient><linearGradient id="g71" gradientUnits="userSpaceOnUse" x1="0" y1="512.5" x2="0" y2="654.5"><stop offset="0" stop-color="#86909f"/><stop offset="0.05" stop-color="#95a0af"/><stop offset="0.105" stop-color="#a0acbb"/><stop offset="0.215" stop-color="#abb7c7"/><stop offset="0.3" stop-color="#b5c1d1"/><stop offset="0.36" stop-color="#c6d2e2"/><stop offset="0.395" stop-color="#d0dcec"/><stop offset="0.43" stop-color="#c8d4e4"/><stop offset="0.465" stop-color="#b3bfcf"/><stop offset="0.51" stop-color="#a6b2c2"/><stop offset="0.6" stop-color="#9da9b8"/><stop offset="0.71" stop-color="#8c97a6"/><stop offset="0.82" stop-color="#79828f"/><stop offset="0.91" stop-color="#646b77"/><stop offset="0.97" stop-color="#585e69"/><stop offset="1" stop-color="#535964"/></linearGradient><linearGradient id="g64" gradientUnits="userSpaceOnUse" x1="0" y1="519.5" x2="0" y2="647.5"><stop offset="0" stop-color="#86909f"/><stop offset="0.05" stop-color="#95a0af"/><stop offset="0.105" stop-color="#a0acbb"/><stop offset="0.215" stop-color="#abb7c7"/><stop offset="0.3" stop-color="#b5c1d1"/><stop offset="0.36" stop-color="#c6d2e2"/><stop offset="0.395" stop-color="#d0dcec"/><stop offset="0.43" stop-color="#c8d4e4"/><stop offset="0.465" stop-color="#b3bfcf"/><stop offset="0.51" stop-color="#a6b2c2"/><stop offset="0.6" stop-color="#9da9b8"/><stop offset="0.71" stop-color="#8c97a6"/><stop offset="0.82" stop-color="#79828f"/><stop offset="0.91" stop-color="#646b77"/><stop offset="0.97" stop-color="#585e69"/><stop offset="1" stop-color="#535964"/></linearGradient><linearGradient id="g39" gradientUnits="userSpaceOnUse" x1="0" y1="544.5" x2="0" y2="622.5"><stop offset="0" stop-color="#86909f"/><stop offset="0.05" stop-color="#95a0af"/><stop offset="0.105" stop-color="#a0acbb"/><stop offset="0.215" stop-color="#abb7c7"/><stop offset="0.3" stop-color="#b5c1d1"/><stop offset="0.36" stop-color="#c6d2e2"/><stop offset="0.395" stop-color="#d0dcec"/><stop offset="0.43" stop-color="#c8d4e4"/><stop offset="0.465" stop-color="#b3bfcf"/><stop offset="0.51" stop-color="#a6b2c2"/><stop offset="0.6" stop-color="#9da9b8"/><stop offset="0.71" stop-color="#8c97a6"/><stop offset="0.82" stop-color="#79828f"/><stop offset="0.91" stop-color="#646b77"/><stop offset="0.97" stop-color="#585e69"/><stop offset="1" stop-color="#535964"/></linearGradient><linearGradient id="g52" gradientUnits="userSpaceOnUse" x1="0" y1="531.5" x2="0" y2="635.5"><stop offset="0" stop-color="#565c66"/><stop offset="0.2" stop-color="#666d78"/><stop offset="0.38" stop-color="#747c88"/><stop offset="0.5" stop-color="#6b727e"/><stop offset="0.8" stop-color="#5e646f"/><stop offset="1" stop-color="#464b53"/></linearGradient><linearGradient id="g52b" gradientUnits="userSpaceOnUse" x1="0" y1="531.5" x2="0" y2="635.5"><stop offset="0" stop-color="#666d78"/><stop offset="0.2" stop-color="#79818d"/><stop offset="0.38" stop-color="#8d96a3"/><stop offset="0.5" stop-color="#7d8591"/><stop offset="0.8" stop-color="#6a717c"/><stop offset="1" stop-color="#4e545d"/></linearGradient><linearGradient id="g52c" gradientUnits="userSpaceOnUse" x1="0" y1="531.5" x2="0" y2="635.5"><stop offset="0" stop-color="#7b8490"/><stop offset="0.25" stop-color="#8f98a5"/><stop offset="0.4" stop-color="#a2acba"/><stop offset="0.55" stop-color="#8a93a0"/><stop offset="0.8" stop-color="#717985"/><stop offset="1" stop-color="#555b65"/></linearGradient></defs><g fill="none" stroke-width="1"><path d="M364.5,713.5 L441.6,446.5 L1408.6,446.5 L1334.5,713.5 Z" stroke="#88888d"/><path d="M366.5,729.5 L442.5,461.5 L1411.5,461.5 L1337,729.5 Z" stroke="#88888d"/><path d="M357.7,486.5 L1324.5,486.5 L1419.5,680.5 L451.8,680.5 Z" stroke="#7a4e55"/><path d="M663.1,364.9 L758.4,559.2 L680.7,810.7 L585.6,615.6 Z" stroke="#7a4e55"/></g><path d="M412,515.5 A26.7,68 0 0 0 412,651.5 L424,658.5 A29.5,75 0 0 1 424,508.5 Z" fill="url(#g75)"/><path d="M412,515.5 A26.7,68 0 0 0 412,651.5" fill="none" stroke="#1e2128" stroke-width="1.1"/><path d="M424,508.5 A29.5,75 0 0 0 424,658.5 L600,658.5 A29.5,75 0 0 1 600,508.5 Z" fill="url(#g75)"/><path d="M424,508.5 A29.5,75 0 0 0 424,658.5" fill="none" stroke="#1e2128" stroke-width="1.1"/><path d="M596.8,556.4 L600.1,555.9 L601.5,555.8 L726.6,555.8 L727.1,555.9 L723.8,556.4Z" fill="#8f97a2" stroke="#8f97a2" stroke-width="0.5"/><path d="M596.8,556.4 L600.1,555.9 M600.1,555.9 L601.5,555.8 M601.5,555.8 L726.6,555.8 M726.6,555.8 L727.1,555.9 M727.1,555.9 L723.8,556.4" fill="none" stroke="#1e2128" stroke-width="1.1" stroke-linecap="round"/><path d="M594.6,628.8 L597.9,630.6 L599.3,630.9 L724.3,630.9 L724.9,630.6 L721.6,628.8Z" fill="#4f545a" stroke="#4f545a" stroke-width="0.5"/><path d="M594.6,628.8 L597.9,630.6 M597.9,630.6 L599.3,630.9 M599.3,630.9 L724.3,630.9 M724.3,630.9 L724.9,630.6 M724.9,630.6 L721.6,628.8" fill="none" stroke="#1e2128" stroke-width="1.1" stroke-linecap="round"/><path d="M594.6,511.8 L604.5,511.5 L716.1,511.5 L719.7,511.8Z" fill="#8b939e" stroke="#8b939e" stroke-width="0.5"/><path d="M594.6,511.8 L604.5,511.5 M604.5,511.5 L716.1,511.5 M716.1,511.5 L719.7,511.8" fill="none" stroke="#1e2128" stroke-width="1.1" stroke-linecap="round"/><path d="M592.9,558 L596.8,556.4 L723.8,556.4 L719.9,558Z" fill="#98a1ad" stroke="#98a1ad" stroke-width="0.5"/><path d="M592.9,558 L596.8,556.4 M723.8,556.4 L719.9,558 M719.9,558 L592.9,558" fill="none" stroke="#1e2128" stroke-width="1.1" stroke-linecap="round"/><path d="M590.9,625.8 L594.6,628.8 L721.6,628.8 L717.9,625.8Z" fill="#51565c" stroke="#51565c" stroke-width="0.5"/><path d="M590.9,625.8 L594.6,628.8 M721.6,628.8 L717.9,625.8 M717.9,625.8 L590.9,625.8" fill="none" stroke="#1e2128" stroke-width="1.1" stroke-linecap="round"/><path d="M590.2,515.6 L593.3,512.2 L594.6,511.8 L719.7,511.8 L720.3,512.2 L717.2,515.6Z" fill="#afbac7" stroke="#afbac7" stroke-width="0.5"/><path d="M590.2,515.6 L593.3,512.2 M593.3,512.2 L594.6,511.8 M719.7,511.8 L720.3,512.2 M720.3,512.2 L717.2,515.6" fill="none" stroke="#1e2128" stroke-width="1.1" stroke-linecap="round"/><path d="M589.9,671.8 L599.7,673.2 L711.3,673.2 L714.9,671.8Z" fill="#4f5359" stroke="#4f5359" stroke-width="0.5"/><path d="M589.9,671.8 L599.7,673.2 M599.7,673.2 L711.3,673.2 M711.3,673.2 L714.9,671.8" fill="none" stroke="#1e2128" stroke-width="1.1" stroke-linecap="round"/><path d="M586.7,520.5 L590.2,515.6 L717.2,515.6 L713.7,520.5Z" fill="#b6c1cf" stroke="#b6c1cf" stroke-width="0.5"/><path d="M586.7,520.5 L590.2,515.6 M717.2,515.6 L713.7,520.5 M713.7,520.5 L586.7,520.5" fill="none" stroke="#1e2128" stroke-width="1.1" stroke-linecap="round"/><path d="M585.7,666.7 L588.6,671.3 L589.9,671.8 L714.9,671.8 L715.6,671.3 L712.7,666.7Z" fill="#626870" stroke="#626870" stroke-width="0.5"/><path d="M585.7,666.7 L588.6,671.3 M588.6,671.3 L589.9,671.8 M714.9,671.8 L715.6,671.3 M715.6,671.3 L712.7,666.7" fill="none" stroke="#1e2128" stroke-width="1.1" stroke-linecap="round"/><path d="M591.9,473.4 L601.8,472.7 L700.8,472.7 L703.5,473.4Z" fill="#9098a4" stroke="#9098a4" stroke-width="0.5"/><path d="M591.9,473.4 L601.8,472.7 M601.8,472.7 L700.8,472.7 M700.8,472.7 L703.5,473.4" fill="none" stroke="#1e2128" stroke-width="1.1" stroke-linecap="round"/><path d="M582.6,660.6 L585.7,666.7 L712.7,666.7 L709.6,660.6Z" fill="#6d737c" stroke="#6d737c" stroke-width="0.5"/><path d="M582.6,660.6 L585.7,666.7 M712.7,666.7 L709.6,660.6 M709.6,660.6 L582.6,660.6" fill="none" stroke="#1e2128" stroke-width="1.1" stroke-linecap="round"/><path d="M582.2,476.4 L591.9,473.4 L703.5,473.4 L707.3,476.4Z" fill="#adb7c4" stroke="#adb7c4" stroke-width="0.5"/><path d="M582.2,476.4 L591.9,473.4 M703.5,473.4 L707.3,476.4" fill="none" stroke="#1e2128" stroke-width="1.1" stroke-linecap="round"/><path d="M578.5,483 L581,477.1 L582.2,476.4 L707.3,476.4 L708,477.1 L705.5,483Z" fill="#c5d0e0" stroke="#c5d0e0" stroke-width="0.5"/><path d="M578.5,483 L581,477.1 M581,477.1 L582.2,476.4 M707.3,476.4 L708,477.1 M708,477.1 L705.5,483" fill="none" stroke="#1e2128" stroke-width="1.1" stroke-linecap="round"/><path d="M585,706.1 L594.8,708.1 L693.8,708.1 L696.6,706.1Z" fill="#50545a" stroke="#50545a" stroke-width="0.5"/><path d="M585,706.1 L594.8,708.1 M594.8,708.1 L693.8,708.1 M693.8,708.1 L696.6,706.1" fill="none" stroke="#1e2128" stroke-width="1.1" stroke-linecap="round"/><path d="M575.9,490.6 L578.5,483 L705.5,483 L702.9,490.6Z" fill="#c8d4e3" stroke="#c8d4e3" stroke-width="0.5"/><path d="M575.9,490.6 L578.5,483 M705.5,483 L702.9,490.6 M702.9,490.6 L575.9,490.6" fill="none" stroke="#1e2128" stroke-width="1.1" stroke-linecap="round"/><path d="M575.5,702.1 L585,706.1 L696.6,706.1 L700.6,702.1Z" fill="#5e646b" stroke="#5e646b" stroke-width="0.5"/><path d="M575.5,702.1 L585,706.1 M696.6,706.1 L700.6,702.1" fill="none" stroke="#1e2128" stroke-width="1.1" stroke-linecap="round"/><path d="M572.3,694.5 L574.3,701.3 L575.5,702.1 L700.6,702.1 L701.3,701.3 L699.3,694.5Z" fill="#8b939d" stroke="#8b939d" stroke-width="0.5"/><path d="M572.3,694.5 L574.3,701.3 M574.3,701.3 L575.5,702.1 M700.6,702.1 L701.3,701.3 M701.3,701.3 L699.3,694.5" fill="none" stroke="#1e2128" stroke-width="1.1" stroke-linecap="round"/><path d="M570.2,686 L572.3,694.5 L699.3,694.5 L697.2,686Z" fill="#949ca8" stroke="#949ca8" stroke-width="0.5"/><path d="M570.2,686 L572.3,694.5 M699.3,694.5 L697.2,686 M697.2,686 L570.2,686" fill="none" stroke="#1e2128" stroke-width="1.1" stroke-linecap="round"/><path d="M574.9,448.6 L584.5,444.8 L683.5,444.8 L686.5,448.6Z" fill="#b0bac8" stroke="#b0bac8" stroke-width="0.5"/><path d="M574.9,448.6 L584.5,444.8 M584.5,444.8 L683.5,444.8 M683.5,444.8 L686.5,448.6" fill="none" stroke="#1e2128" stroke-width="1.1" stroke-linecap="round"/><path d="M565.8,453.9 L574.9,448.6 L686.5,448.6 L690.9,453.9Z" fill="#c3cfde" stroke="#c3cfde" stroke-width="0.5"/><path d="M565.8,453.9 L574.9,448.6 M686.5,448.6 L690.9,453.9" fill="none" stroke="#1e2128" stroke-width="1.1" stroke-linecap="round"/><path d="M563.2,462.5 L564.7,454.8 L565.8,453.9 L690.9,453.9 L691.7,454.8 L690.2,462.5Z" fill="#cdd9e9" stroke="#cdd9e9" stroke-width="0.5"/><path d="M563.2,462.5 L564.7,454.8 M564.7,454.8 L565.8,453.9 M690.9,453.9 L691.7,454.8 M691.7,454.8 L690.2,462.5" fill="none" stroke="#1e2128" stroke-width="1.1" stroke-linecap="round"/><path d="M561.8,471.9 L563.2,462.5 L690.2,462.5 L688.8,471.9Z" fill="#ccd8e8" stroke="#ccd8e8" stroke-width="0.5"/><path d="M561.8,471.9 L563.2,462.5 M690.2,462.5 L688.8,471.9 M688.8,471.9 L561.8,471.9" fill="none" stroke="#1e2128" stroke-width="1.1" stroke-linecap="round"/><path d="M566.8,724.2 L576.1,729.2 L675.1,729.2 L678.3,724.2Z" fill="#646971" stroke="#646971" stroke-width="0.5"/><path d="M566.8,724.2 L576.1,729.2 M576.1,729.2 L675.1,729.2 M675.1,729.2 L678.3,724.2" fill="none" stroke="#1e2128" stroke-width="1.1" stroke-linecap="round"/><path d="M558,718 L566.8,724.2 L678.3,724.2 L683.1,718Z" fill="#878f99" stroke="#878f99" stroke-width="0.5"/><path d="M558,718 L566.8,724.2 M678.3,724.2 L683.1,718" fill="none" stroke="#1e2128" stroke-width="1.1" stroke-linecap="round"/><path d="M555.9,708.9 L556.9,717.1 L558,718 L683.1,718 L683.9,717.1 L682.9,708.9Z" fill="#acb6c4" stroke="#acb6c4" stroke-width="0.5"/><path d="M555.9,708.9 L556.9,717.1 M556.9,717.1 L558,718 M683.1,718 L683.9,717.1 M683.9,717.1 L682.9,708.9" fill="none" stroke="#1e2128" stroke-width="1.1" stroke-linecap="round"/><path d="M555,699.1 L555.9,708.9 L682.9,708.9 L682,699.1Z" fill="#b3bdcb" stroke="#b3bdcb" stroke-width="0.5"/><path d="M555,699.1 L555.9,708.9 M682.9,708.9 L682,699.1 M682,699.1 L555,699.1" fill="none" stroke="#1e2128" stroke-width="1.1" stroke-linecap="round"/><path d="M683.9,717.1 L675.1,729.2 L678.8,726.5 L694.7,709.3Z" fill="#4c5056" stroke="#4c5056" stroke-width="0.5"/><path d="M683.9,717.1 L675.1,729.2 M675.1,729.2 L678.8,726.5 M678.8,726.5 L694.7,709.3 M694.7,709.3 L683.9,717.1" fill="none" stroke="#1e2128" stroke-width="1.1" stroke-linecap="round"/><path d="M555.6,440 L564.5,433.6 L663.5,433.6 L667.2,440Z" fill="#c5d1e0" stroke="#c5d1e0" stroke-width="0.5"/><path d="M555.6,440 L564.5,433.6 M564.5,433.6 L663.5,433.6 M663.5,433.6 L667.2,440" fill="none" stroke="#1e2128" stroke-width="1.1" stroke-linecap="round"/><path d="M547.4,447.1 L555.6,440 L667.2,440 L672.4,447.1Z" fill="#ccd8e8" stroke="#ccd8e8" stroke-width="0.5"/><path d="M547.4,447.1 L555.6,440 M667.2,440 L672.4,447.1" fill="none" stroke="#1e2128" stroke-width="1.1" stroke-linecap="round"/><path d="M546,456.6 L546.4,448.1 L547.4,447.1 L672.4,447.1 L673.4,448.1 L673,456.6Z" fill="#c6d2e1" stroke="#c6d2e1" stroke-width="0.5"/><path d="M546,456.6 L546.4,448.1 M546.4,448.1 L547.4,447.1 M672.4,447.1 L673.4,448.1 M673.4,448.1 L673,456.6" fill="none" stroke="#1e2128" stroke-width="1.1" stroke-linecap="round"/><path d="M545.9,466.6 L546,456.6 L673,456.6 L672.9,466.6Z" fill="#c2cddc" stroke="#c2cddc" stroke-width="0.5"/><path d="M545.9,466.6 L546,456.6 M673,456.6 L672.9,466.6 M672.9,466.6 L545.9,466.6" fill="none" stroke="#1e2128" stroke-width="1.1" stroke-linecap="round"/><path d="M555.6,732.6 L654.6,732.6 L658.5,733.4 L559.5,733.4Z" fill="#4d5157" stroke="#4d5157" stroke-width="0.5"/><path d="M555.6,732.6 L654.6,732.6 M654.6,732.6 L658.5,733.4 M658.5,733.4 L559.5,733.4 M559.5,733.4 L555.6,732.6" fill="none" stroke="#1e2128" stroke-width="1.1" stroke-linecap="round"/><path d="M545.9,466.6 L672.9,466.6 L668,467.9 L541,467.9Z" fill="#929ba6" stroke="#929ba6" stroke-width="0.5"/><path d="M545.9,466.6 L672.9,466.6 M672.9,466.6 L668,467.9 M668,467.9 L541,467.9 M541,467.9 L545.9,466.6" fill="none" stroke="#1e2128" stroke-width="1.1" stroke-linecap="round"/><path d="M684.6,450.2 L667.4,434.4 L663.5,433.6 L673.4,448.1Z" fill="#79818a" stroke="#79818a" stroke-width="0.5"/><path d="M684.6,450.2 L667.4,434.4 M667.4,434.4 L663.5,433.6 M663.5,433.6 L673.4,448.1 M673.4,448.1 L684.6,450.2" fill="none" stroke="#1e2128" stroke-width="1.1" stroke-linecap="round"/><path d="M547.2,725.3 L555.6,732.6 L654.6,732.6 L658.7,725.3Z" fill="#8c949f" stroke="#8c949f" stroke-width="0.5"/><path d="M547.2,725.3 L555.6,732.6 M555.6,732.6 L654.6,732.6 M654.6,732.6 L658.7,725.3" fill="none" stroke="#1e2128" stroke-width="1.1" stroke-linecap="round"/><path d="M539.4,717.8 L547.2,725.3 L658.7,725.3 L664.4,717.8Z" fill="#a9b3c0" stroke="#a9b3c0" stroke-width="0.5"/><path d="M539.4,717.8 L547.2,725.3 M658.7,725.3 L664.4,717.8" fill="none" stroke="#1e2128" stroke-width="1.1" stroke-linecap="round"/><path d="M539.1,698.3 L538.6,708.2 L665.6,708.2 L666.1,698.3Z" fill="#c7d2e2" stroke="#c7d2e2" stroke-width="0.5"/><path d="M539.1,698.3 L538.6,708.2 M665.6,708.2 L666.1,698.3 M666.1,698.3 L539.1,698.3" fill="none" stroke="#1e2128" stroke-width="1.1" stroke-linecap="round"/><path d="M538.6,708.2 L538.4,716.8 L539.4,717.8 L664.4,717.8 L665.4,716.8 L665.6,708.2Z" fill="#c3cede" stroke="#c3cede" stroke-width="0.5"/><path d="M538.6,708.2 L538.4,716.8 M538.4,716.8 L539.4,717.8 M664.4,717.8 L665.4,716.8 M665.4,716.8 L665.6,708.2" fill="none" stroke="#1e2128" stroke-width="1.1" stroke-linecap="round"/><path d="M534.2,695.1 L661.2,695.1 L666.1,698.3 L539.1,698.3Z" fill="#50555b" stroke="#50555b" stroke-width="0.5"/><path d="M534.2,695.1 L661.2,695.1 M661.2,695.1 L666.1,698.3 M666.1,698.3 L539.1,698.3 M539.1,698.3 L534.2,695.1" fill="none" stroke="#1e2128" stroke-width="1.1" stroke-linecap="round"/><path d="M665.4,716.8 L654.6,732.6 L658.5,733.4 L676.6,718.9Z" fill="#50555b" stroke="#50555b" stroke-width="0.5"/><path d="M665.4,716.8 L654.6,732.6 M654.6,732.6 L658.5,733.4 M658.5,733.4 L676.6,718.9 M676.6,718.9 L665.4,716.8" fill="none" stroke="#1e2128" stroke-width="1.1" stroke-linecap="round"/><path d="M547.9,437.8 L646.9,437.8 L643.2,440.5 L544.2,440.5Z" fill="#a3adba" stroke="#a3adba" stroke-width="0.5"/><path d="M547.9,437.8 L646.9,437.8 M646.9,437.8 L643.2,440.5 M643.2,440.5 L544.2,440.5 M544.2,440.5 L547.9,437.8" fill="none" stroke="#1e2128" stroke-width="1.1" stroke-linecap="round"/><path d="M530.3,475.5 L529.1,466 L656.1,466 L657.3,475.5Z" fill="#aab4c2" stroke="#aab4c2" stroke-width="0.5"/><path d="M530.3,475.5 L529.1,466 M656.1,466 L657.3,475.5 M657.3,475.5 L530.3,475.5" fill="none" stroke="#1e2128" stroke-width="1.1" stroke-linecap="round"/><path d="M536.3,448.7 L544.2,440.5 L643.2,440.5 L647.9,448.7Z" fill="#cdd9e9" stroke="#cdd9e9" stroke-width="0.5"/><path d="M536.3,448.7 L544.2,440.5 M544.2,440.5 L643.2,440.5 M643.2,440.5 L647.9,448.7" fill="none" stroke="#1e2128" stroke-width="1.1" stroke-linecap="round"/><path d="M529.1,466 L528.3,457.7 L529.1,456.7 L654.2,456.7 L655.3,457.7 L656.1,466Z" fill="#b1bcca" stroke="#b1bcca" stroke-width="0.5"/><path d="M529.1,466 L528.3,457.7 M528.3,457.7 L529.1,456.7 M654.2,456.7 L655.3,457.7 M655.3,457.7 L656.1,466" fill="none" stroke="#1e2128" stroke-width="1.1" stroke-linecap="round"/><path d="M529.1,456.7 L536.3,448.7 L647.9,448.7 L654.2,456.7Z" fill="#c7d3e2" stroke="#c7d3e2" stroke-width="0.5"/><path d="M529.1,456.7 L536.3,448.7 M647.9,448.7 L654.2,456.7" fill="none" stroke="#1e2128" stroke-width="1.1" stroke-linecap="round"/><path d="M530.3,475.5 L657.3,475.5 L652.8,481 L525.8,481Z" fill="#b2bcca" stroke="#b2bcca" stroke-width="0.5"/><path d="M530.3,475.5 L657.3,475.5 M657.3,475.5 L652.8,481 M652.8,481 L525.8,481 M525.8,481 L530.3,475.5" fill="none" stroke="#1e2128" stroke-width="1.1" stroke-linecap="round"/><path d="M521.7,465.7 L529.2,458.9 L526,464.7 L512.5,482.4Z" fill="#98a1ad" stroke="#98a1ad" stroke-width="0.5"/><path d="M521.7,465.7 L529.2,458.9 M529.2,458.9 L526,464.7 M526,464.7 L512.5,482.4 M512.5,482.4 L521.7,465.7" fill="none" stroke="#1e2128" stroke-width="1.1" stroke-linecap="round"/><path d="M536,718.1 L635,718.1 L638.5,722.2 L539.5,722.2Z" fill="#54595f" stroke="#54595f" stroke-width="0.5"/><path d="M536,718.1 L635,718.1 M635,718.1 L638.5,722.2 M638.5,722.2 L539.5,722.2 M539.5,722.2 L536,718.1" fill="none" stroke="#1e2128" stroke-width="1.1" stroke-linecap="round"/><path d="M524.2,683.6 L522.4,692.5 L649.4,692.5 L651.2,683.6Z" fill="#cdd9e9" stroke="#cdd9e9" stroke-width="0.5"/><path d="M524.2,683.6 L522.4,692.5 M649.4,692.5 L651.2,683.6 M651.2,683.6 L524.2,683.6" fill="none" stroke="#1e2128" stroke-width="1.1" stroke-linecap="round"/><path d="M666.1,449.9 L646.9,437.8 L643.2,440.5 L655.3,457.7Z" fill="#939ba7" stroke="#939ba7" stroke-width="0.5"/><path d="M666.1,449.9 L646.9,437.8 M646.9,437.8 L643.2,440.5 M643.2,440.5 L655.3,457.7 M655.3,457.7 L666.1,449.9" fill="none" stroke="#1e2128" stroke-width="1.1" stroke-linecap="round"/><path d="M520.1,676.4 L647.1,676.4 L651.2,683.6 L524.2,683.6Z" fill="#676d75" stroke="#676d75" stroke-width="0.5"/><path d="M520.1,676.4 L647.1,676.4 M647.1,676.4 L651.2,683.6 M651.2,683.6 L524.2,683.6 M524.2,683.6 L520.1,676.4" fill="none" stroke="#1e2128" stroke-width="1.1" stroke-linecap="round"/><path d="M522.4,692.5 L521.1,700.4 L521.9,701.4 L647,701.4 L648.1,700.4 L649.4,692.5Z" fill="#ccd8e8" stroke="#ccd8e8" stroke-width="0.5"/><path d="M522.4,692.5 L521.1,700.4 M521.1,700.4 L521.9,701.4 M647,701.4 L648.1,700.4 M648.1,700.4 L649.4,692.5" fill="none" stroke="#1e2128" stroke-width="1.1" stroke-linecap="round"/><path d="M528.6,709.4 L536,718.1 L635,718.1 L640.2,709.4Z" fill="#adb7c4" stroke="#adb7c4" stroke-width="0.5"/><path d="M528.6,709.4 L536,718.1 M536,718.1 L635,718.1 M635,718.1 L640.2,709.4" fill="none" stroke="#1e2128" stroke-width="1.1" stroke-linecap="round"/><path d="M521.9,701.4 L528.6,709.4 L640.2,709.4 L647,701.4Z" fill="#c1cddc" stroke="#c1cddc" stroke-width="0.5"/><path d="M521.9,701.4 L528.6,709.4 M640.2,709.4 L647,701.4" fill="none" stroke="#1e2128" stroke-width="1.1" stroke-linecap="round"/><path d="M507,669.9 L519.5,687.3 L522.2,694.3 L515,689.9Z" fill="#696f77" stroke="#696f77" stroke-width="0.5"/><path d="M507,669.9 L519.5,687.3 M519.5,687.3 L522.2,694.3 M522.2,694.3 L515,689.9 M515,689.9 L507,669.9" fill="none" stroke="#1e2128" stroke-width="1.1" stroke-linecap="round"/><path d="M516.9,497.4 L514.4,489.6 L641.4,489.6 L643.9,497.4Z" fill="#88909b" stroke="#88909b" stroke-width="0.5"/><path d="M516.9,497.4 L514.4,489.6 M641.4,489.6 L643.9,497.4 M643.9,497.4 L516.9,497.4" fill="none" stroke="#1e2128" stroke-width="1.1" stroke-linecap="round"/><path d="M516.9,497.4 L643.9,497.4 L640.4,506.4 L513.4,506.4Z" fill="#c6d2e1" stroke="#c6d2e1" stroke-width="0.5"/><path d="M516.9,497.4 L643.9,497.4 M643.9,497.4 L640.4,506.4 M640.4,506.4 L513.4,506.4 M513.4,506.4 L516.9,497.4" fill="none" stroke="#1e2128" stroke-width="1.1" stroke-linecap="round"/><path d="M648.1,700.4 L635,718.1 L638.5,722.2 L658.3,712.2Z" fill="#595e65" stroke="#595e65" stroke-width="0.5"/><path d="M648.1,700.4 L635,718.1 M635,718.1 L638.5,722.2 M638.5,722.2 L658.3,712.2 M658.3,712.2 L648.1,700.4" fill="none" stroke="#1e2128" stroke-width="1.1" stroke-linecap="round"/><path d="M529.2,458.9 L628.2,458.9 L625,464.7 L526,464.7Z" fill="#bec9d8" stroke="#bec9d8" stroke-width="0.5"/><path d="M529.2,458.9 L628.2,458.9 M628.2,458.9 L625,464.7 M625,464.7 L526,464.7 M526,464.7 L529.2,458.9" fill="none" stroke="#1e2128" stroke-width="1.1" stroke-linecap="round"/><path d="M514.4,489.6 L512.5,482.4 L513.3,481.6 L638.3,481.6 L639.5,482.4 L641.4,489.6Z" fill="#929aa6" stroke="#929aa6" stroke-width="0.5"/><path d="M514.4,489.6 L512.5,482.4 M512.5,482.4 L513.3,481.6 M638.3,481.6 L639.5,482.4 M639.5,482.4 L641.4,489.6" fill="none" stroke="#1e2128" stroke-width="1.1" stroke-linecap="round"/><path d="M507.4,495.7 L514.4,494.9 L512.2,503.1 L501.1,519.4Z" fill="#a2abb8" stroke="#a2abb8" stroke-width="0.5"/><path d="M507.4,495.7 L514.4,494.9 M514.4,494.9 L512.2,503.1 M512.2,503.1 L501.1,519.4 M501.1,519.4 L507.4,495.7" fill="none" stroke="#1e2128" stroke-width="1.1" stroke-linecap="round"/><path d="M513.3,481.6 L519.4,473.7 L631,473.7 L638.3,481.6Z" fill="#b4bfcd" stroke="#b4bfcd" stroke-width="0.5"/><path d="M513.3,481.6 L519.4,473.7 M631,473.7 L638.3,481.6" fill="none" stroke="#1e2128" stroke-width="1.1" stroke-linecap="round"/><path d="M519.4,473.7 L526,464.7 L625,464.7 L631,473.7Z" fill="#c6d1e1" stroke="#c6d1e1" stroke-width="0.5"/><path d="M519.4,473.7 L526,464.7 M526,464.7 L625,464.7 M625,464.7 L631,473.7" fill="none" stroke="#1e2128" stroke-width="1.1" stroke-linecap="round"/><path d="M512.2,656.8 L509.3,663.6 L636.3,663.6 L639.2,656.8Z" fill="#c4cfdf" stroke="#c4cfdf" stroke-width="0.5"/><path d="M512.2,656.8 L509.3,663.6 M636.3,663.6 L639.2,656.8 M639.2,656.8 L512.2,656.8" fill="none" stroke="#1e2128" stroke-width="1.1" stroke-linecap="round"/><path d="M509.3,646.5 L636.3,646.5 L639.2,656.8 L512.2,656.8Z" fill="#8e97a2" stroke="#8e97a2" stroke-width="0.5"/><path d="M509.3,646.5 L636.3,646.5 M636.3,646.5 L639.2,656.8 M639.2,656.8 L512.2,656.8 M512.2,656.8 L509.3,646.5" fill="none" stroke="#1e2128" stroke-width="1.1" stroke-linecap="round"/><path d="M497.8,629 L508.1,644 L509.8,653 L502.7,654.8Z" fill="#838b95" stroke="#838b95" stroke-width="0.5"/><path d="M497.8,629 L508.1,644 M508.1,644 L509.8,653 M509.8,653 L502.7,654.8 M502.7,654.8 L497.8,629" fill="none" stroke="#1e2128" stroke-width="1.1" stroke-linecap="round"/><path d="M509.3,663.6 L507,669.9 L507.7,670.7 L632.8,670.7 L634,669.9 L636.3,663.6Z" fill="#c7d3e3" stroke="#c7d3e3" stroke-width="0.5"/><path d="M509.3,663.6 L507,669.9 M507,669.9 L507.7,670.7 M632.8,670.7 L634,669.9 M634,669.9 L636.3,663.6" fill="none" stroke="#1e2128" stroke-width="1.1" stroke-linecap="round"/><path d="M519.5,687.3 L618.5,687.3 L621.2,694.3 L522.2,694.3Z" fill="#7b828c" stroke="#7b828c" stroke-width="0.5"/><path d="M519.5,687.3 L618.5,687.3 M618.5,687.3 L621.2,694.3 M621.2,694.3 L522.2,694.3 M522.2,694.3 L519.5,687.3" fill="none" stroke="#1e2128" stroke-width="1.1" stroke-linecap="round"/><path d="M507.7,670.7 L513.4,678.2 L624.9,678.2 L632.8,670.7Z" fill="#ccd8e8" stroke="#ccd8e8" stroke-width="0.5"/><path d="M507.7,670.7 L513.4,678.2 M624.9,678.2 L632.8,670.7" fill="none" stroke="#1e2128" stroke-width="1.1" stroke-linecap="round"/><path d="M507.2,529.7 L634.2,529.7 L632.1,541.2 L505.1,541.2Z" fill="#cdd9e9" stroke="#cdd9e9" stroke-width="0.5"/><path d="M507.2,529.7 L634.2,529.7 M634.2,529.7 L632.1,541.2 M632.1,541.2 L505.1,541.2 M505.1,541.2 L507.2,529.7" fill="none" stroke="#1e2128" stroke-width="1.1" stroke-linecap="round"/><path d="M513.4,678.2 L519.5,687.3 L618.5,687.3 L624.9,678.2Z" fill="#c3cfde" stroke="#c3cfde" stroke-width="0.5"/><path d="M513.4,678.2 L519.5,687.3 M519.5,687.3 L618.5,687.3 M618.5,687.3 L624.9,678.2" fill="none" stroke="#1e2128" stroke-width="1.1" stroke-linecap="round"/><path d="M507.2,529.7 L503.8,524.5 L630.8,524.5 L634.2,529.7Z" fill="#60666d" stroke="#60666d" stroke-width="0.5"/><path d="M507.2,529.7 L503.8,524.5 M630.8,524.5 L634.2,529.7 M634.2,529.7 L507.2,529.7" fill="none" stroke="#1e2128" stroke-width="1.1" stroke-linecap="round"/><path d="M648.7,465.7 L628.2,458.9 L625,464.7 L639.5,482.4Z" fill="#a5afbc" stroke="#a5afbc" stroke-width="0.5"/><path d="M648.7,465.7 L628.2,458.9 M628.2,458.9 L625,464.7 M625,464.7 L639.5,482.4 M639.5,482.4 L648.7,465.7" fill="none" stroke="#1e2128" stroke-width="1.1" stroke-linecap="round"/><path d="M498.1,536.4 L505.4,541.7 L504.4,551.3 L495.3,564.1Z" fill="#a1abb7" stroke="#a1abb7" stroke-width="0.5"/><path d="M498.1,536.4 L505.4,541.7 M505.4,541.7 L504.4,551.3 M504.4,551.3 L495.3,564.1 M495.3,564.1 L498.1,536.4" fill="none" stroke="#1e2128" stroke-width="1.1" stroke-linecap="round"/><path d="M503.1,609 L630.1,609 L631.5,621.2 L504.5,621.2Z" fill="#afb9c7" stroke="#afb9c7" stroke-width="0.5"/><path d="M503.1,609 L630.1,609 M630.1,609 L631.5,621.2 M631.5,621.2 L504.5,621.2 M504.5,621.2 L503.1,609" fill="none" stroke="#1e2128" stroke-width="1.1" stroke-linecap="round"/><path d="M494.7,582.6 L503.2,593.4 L503.6,603.3 L495.9,611.1Z" fill="#979fab" stroke="#979fab" stroke-width="0.5"/><path d="M494.7,582.6 L503.2,593.4 M503.2,593.4 L503.6,603.3 M503.6,603.3 L495.9,611.1 M495.9,611.1 L494.7,582.6" fill="none" stroke="#1e2128" stroke-width="1.1" stroke-linecap="round"/><path d="M504.5,621.2 L500.8,625.1 L627.8,625.1 L631.5,621.2Z" fill="#aeb8c6" stroke="#aeb8c6" stroke-width="0.5"/><path d="M504.5,621.2 L500.8,625.1 M627.8,625.1 L631.5,621.2 M631.5,621.2 L504.5,621.2" fill="none" stroke="#1e2128" stroke-width="1.1" stroke-linecap="round"/><path d="M502.4,568.4 L629.4,568.4 L629,581 L502,581Z" fill="#c4d0df" stroke="#c4d0df" stroke-width="0.5"/><path d="M502.4,568.4 L629.4,568.4 M629.4,568.4 L629,581 M629,581 L502,581 M502,581 L502.4,568.4" fill="none" stroke="#1e2128" stroke-width="1.1" stroke-linecap="round"/><path d="M511.7,493.8 L514.4,494.9 L613.4,494.9 L623.3,493.8Z" fill="#959ea9" stroke="#959ea9" stroke-width="0.5"/><path d="M511.7,493.8 L514.4,494.9 M514.4,494.9 L613.4,494.9 M613.4,494.9 L623.3,493.8 M623.3,493.8 L511.7,493.8" fill="none" stroke="#1e2128" stroke-width="1.1" stroke-linecap="round"/><path d="M503.8,524.5 L501.1,519.4 L501.7,518.8 L626.8,518.8 L628.1,519.4 L630.8,524.5Z" fill="#6b7179" stroke="#6b7179" stroke-width="0.5"/><path d="M503.8,524.5 L501.1,519.4 M501.1,519.4 L501.7,518.8 M626.8,518.8 L628.1,519.4 M628.1,519.4 L630.8,524.5" fill="none" stroke="#1e2128" stroke-width="1.1" stroke-linecap="round"/><path d="M502.4,568.4 L498.5,566.5 L625.5,566.5 L629.4,568.4Z" fill="#4f545a" stroke="#4f545a" stroke-width="0.5"/><path d="M502.4,568.4 L498.5,566.5 M625.5,566.5 L629.4,568.4 M629.4,568.4 L502.4,568.4" fill="none" stroke="#1e2128" stroke-width="1.1" stroke-linecap="round"/><path d="M502,581 L498.1,581.5 L625.1,581.5 L629,581Z" fill="#8d95a0" stroke="#8d95a0" stroke-width="0.5"/><path d="M502,581 L498.1,581.5 M625.1,581.5 L629,581 M629,581 L502,581" fill="none" stroke="#1e2128" stroke-width="1.1" stroke-linecap="round"/><path d="M501.7,518.8 L506.8,512 L618.4,512 L626.8,518.8Z" fill="#959eaa" stroke="#959eaa" stroke-width="0.5"/><path d="M501.7,518.8 L506.8,512 M618.4,512 L626.8,518.8" fill="none" stroke="#1e2128" stroke-width="1.1" stroke-linecap="round"/><path d="M514.4,494.9 L613.4,494.9 L611.2,503.1 L512.2,503.1Z" fill="#cbd7e7" stroke="#cbd7e7" stroke-width="0.5"/><path d="M514.4,494.9 L613.4,494.9 M613.4,494.9 L611.2,503.1 M611.2,503.1 L512.2,503.1 M512.2,503.1 L514.4,494.9" fill="none" stroke="#1e2128" stroke-width="1.1" stroke-linecap="round"/><path d="M500.8,625.1 L497.8,629 L498.5,629.5 L623.5,629.5 L624.8,629 L627.8,625.1Z" fill="#b5bfcd" stroke="#b5bfcd" stroke-width="0.5"/><path d="M500.8,625.1 L497.8,629 M497.8,629 L498.5,629.5 M623.5,629.5 L624.8,629 M624.8,629 L627.8,625.1" fill="none" stroke="#1e2128" stroke-width="1.1" stroke-linecap="round"/><path d="M506.8,512 L512.2,503.1 L611.2,503.1 L618.4,512Z" fill="#b1bbc9" stroke="#b1bbc9" stroke-width="0.5"/><path d="M506.8,512 L512.2,503.1 M512.2,503.1 L611.2,503.1 M611.2,503.1 L618.4,512" fill="none" stroke="#1e2128" stroke-width="1.1" stroke-linecap="round"/><path d="M634,669.9 L618.5,687.3 L621.2,694.3 L642,689.9Z" fill="#767d86" stroke="#767d86" stroke-width="0.5"/><path d="M634,669.9 L618.5,687.3 M618.5,687.3 L621.2,694.3 M621.2,694.3 L642,689.9 M642,689.9 L634,669.9" fill="none" stroke="#1e2128" stroke-width="1.1" stroke-linecap="round"/><path d="M506.9,655.5 L509.8,653 L608.8,653 L618.5,655.5Z" fill="#51555c" stroke="#51555c" stroke-width="0.5"/><path d="M506.9,655.5 L509.8,653 M509.8,653 L608.8,653 M608.8,653 L618.5,655.5 M618.5,655.5 L506.9,655.5" fill="none" stroke="#1e2128" stroke-width="1.1" stroke-linecap="round"/><path d="M498.5,629.5 L503.2,635.6 L614.7,635.6 L623.5,629.5Z" fill="#c9d4e4" stroke="#c9d4e4" stroke-width="0.5"/><path d="M498.5,629.5 L503.2,635.6 M614.7,635.6 L623.5,629.5" fill="none" stroke="#1e2128" stroke-width="1.1" stroke-linecap="round"/><path d="M498.5,566.5 L495.3,564.1 L495.9,563.8 L621,563.8 L622.3,564.1 L625.5,566.5Z" fill="#51565c" stroke="#51565c" stroke-width="0.5"/><path d="M498.5,566.5 L495.3,564.1 M495.3,564.1 L495.9,563.8 M621,563.8 L622.3,564.1 M622.3,564.1 L625.5,566.5" fill="none" stroke="#1e2128" stroke-width="1.1" stroke-linecap="round"/><path d="M498.7,536.1 L502.3,537.5 L613.9,537.5 L623.7,536.1Z" fill="#9aa2ae" stroke="#9aa2ae" stroke-width="0.5"/><path d="M498.7,536.1 L502.3,537.5 M613.9,537.5 L623.7,536.1 M623.7,536.1 L498.7,536.1" fill="none" stroke="#1e2128" stroke-width="1.1" stroke-linecap="round"/><path d="M498.1,581.5 L494.7,582.6 L495.3,582.8 L620.4,582.8 L621.7,582.6 L625.1,581.5Z" fill="#969faa" stroke="#969faa" stroke-width="0.5"/><path d="M498.1,581.5 L494.7,582.6 M494.7,582.6 L495.3,582.8 M620.4,582.8 L621.7,582.6 M621.7,582.6 L625.1,581.5" fill="none" stroke="#1e2128" stroke-width="1.1" stroke-linecap="round"/><path d="M508.1,644 L607.1,644 L608.8,653 L509.8,653Z" fill="#a0a9b5" stroke="#a0a9b5" stroke-width="0.5"/><path d="M508.1,644 L607.1,644 M607.1,644 L608.8,653 M608.8,653 L509.8,653 M509.8,653 L508.1,644" fill="none" stroke="#1e2128" stroke-width="1.1" stroke-linecap="round"/><path d="M503.2,635.6 L508.1,644 L607.1,644 L614.7,635.6Z" fill="#cdd8e8" stroke="#cdd8e8" stroke-width="0.5"/><path d="M503.2,635.6 L508.1,644 M508.1,644 L607.1,644 M607.1,644 L614.7,635.6" fill="none" stroke="#1e2128" stroke-width="1.1" stroke-linecap="round"/><path d="M496.4,611.2 L500.2,608.7 L611.8,608.7 L621.5,611.2Z" fill="#51565d" stroke="#51565d" stroke-width="0.5"/><path d="M496.4,611.2 L500.2,608.7 M611.8,608.7 L621.5,611.2 M621.5,611.2 L496.4,611.2" fill="none" stroke="#1e2128" stroke-width="1.1" stroke-linecap="round"/><path d="M495.9,563.8 L500.2,558.8 L611.7,558.8 L621,563.8Z" fill="#6f757e" stroke="#6f757e" stroke-width="0.5"/><path d="M495.9,563.8 L500.2,558.8 M611.7,558.8 L621,563.8" fill="none" stroke="#1e2128" stroke-width="1.1" stroke-linecap="round"/><path d="M495.3,582.8 L499.3,586.8 L610.9,586.8 L620.4,582.8Z" fill="#b7c2d0" stroke="#b7c2d0" stroke-width="0.5"/><path d="M495.3,582.8 L499.3,586.8 M610.9,586.8 L620.4,582.8" fill="none" stroke="#1e2128" stroke-width="1.1" stroke-linecap="round"/><path d="M502.3,537.5 L505.4,541.7 L604.4,541.7 L613.9,537.5Z" fill="#b4becc" stroke="#b4becc" stroke-width="0.5"/><path d="M502.3,537.5 L505.4,541.7 M505.4,541.7 L604.4,541.7 M604.4,541.7 L613.9,537.5" fill="none" stroke="#1e2128" stroke-width="1.1" stroke-linecap="round"/><path d="M634.4,495.7 L613.4,494.9 L611.2,503.1 L628.1,519.4Z" fill="#afb9c7" stroke="#afb9c7" stroke-width="0.5"/><path d="M634.4,495.7 L613.4,494.9 M613.4,494.9 L611.2,503.1 M611.2,503.1 L628.1,519.4 M628.1,519.4 L634.4,495.7" fill="none" stroke="#1e2128" stroke-width="1.1" stroke-linecap="round"/><path d="M500.2,558.8 L504.4,551.3 L603.4,551.3 L611.7,558.8Z" fill="#9199a5" stroke="#9199a5" stroke-width="0.5"/><path d="M500.2,558.8 L504.4,551.3 M504.4,551.3 L603.4,551.3 M603.4,551.3 L611.7,558.8" fill="none" stroke="#1e2128" stroke-width="1.1" stroke-linecap="round"/><path d="M500.2,608.7 L503.6,603.3 L602.6,603.3 L611.8,608.7Z" fill="#697078" stroke="#697078" stroke-width="0.5"/><path d="M500.2,608.7 L503.6,603.3 M503.6,603.3 L602.6,603.3 M602.6,603.3 L611.8,608.7" fill="none" stroke="#1e2128" stroke-width="1.1" stroke-linecap="round"/><path d="M505.4,541.7 L604.4,541.7 L603.4,551.3 L504.4,551.3Z" fill="#cad6e6" stroke="#cad6e6" stroke-width="0.5"/><path d="M505.4,541.7 L604.4,541.7 M604.4,541.7 L603.4,551.3 M603.4,551.3 L504.4,551.3 M504.4,551.3 L505.4,541.7" fill="none" stroke="#1e2128" stroke-width="1.1" stroke-linecap="round"/><path d="M499.3,586.8 L503.2,593.4 L602.2,593.4 L610.9,586.8Z" fill="#c7d3e2" stroke="#c7d3e2" stroke-width="0.5"/><path d="M499.3,586.8 L503.2,593.4 M503.2,593.4 L602.2,593.4 M602.2,593.4 L610.9,586.8" fill="none" stroke="#1e2128" stroke-width="1.1" stroke-linecap="round"/><path d="M503.2,593.4 L602.2,593.4 L602.6,603.3 L503.6,603.3Z" fill="#bbc6d5" stroke="#bbc6d5" stroke-width="0.5"/><path d="M503.2,593.4 L602.2,593.4 M602.2,593.4 L602.6,603.3 M602.6,603.3 L503.6,603.3 M503.6,603.3 L503.2,593.4" fill="none" stroke="#1e2128" stroke-width="1.1" stroke-linecap="round"/><path d="M624.8,629 L607.1,644 L608.8,653 L629.7,654.8Z" fill="#9099a4" stroke="#9099a4" stroke-width="0.5"/><path d="M624.8,629 L607.1,644 M607.1,644 L608.8,653 M608.8,653 L629.7,654.8 M629.7,654.8 L624.8,629" fill="none" stroke="#1e2128" stroke-width="1.1" stroke-linecap="round"/><path d="M625.1,536.4 L604.4,541.7 L603.4,551.3 L622.3,564.1Z" fill="#aeb9c6" stroke="#aeb9c6" stroke-width="0.5"/><path d="M625.1,536.4 L604.4,541.7 M604.4,541.7 L603.4,551.3 M603.4,551.3 L622.3,564.1 M622.3,564.1 L625.1,536.4" fill="none" stroke="#1e2128" stroke-width="1.1" stroke-linecap="round"/><path d="M621.7,582.6 L602.2,593.4 L602.6,603.3 L622.9,611.1Z" fill="#a4adba" stroke="#a4adba" stroke-width="0.5"/><path d="M621.7,582.6 L602.2,593.4 M602.2,593.4 L602.6,603.3 M602.6,603.3 L622.9,611.1 M622.9,611.1 L621.7,582.6" fill="none" stroke="#1e2128" stroke-width="1.1" stroke-linecap="round"/><path d="M683.9,468.7 L684.4,458.8 L684.6,450.2 L673.4,448.1 L673,456.6 L672.9,466.6 L668,467.9 L667.1,458.1 L666.1,449.9 L655.3,457.7 L656.1,466 L657.3,475.5 L652.8,481 L650.7,472.5 L648.7,465.7 L639.5,482.4 L641.4,489.6 L643.9,497.4 L640.4,506.4 L637.3,500.3 L634.4,495.7 L628.1,519.4 L630.8,524.5 L634.2,529.7 L632.1,541.2 L628.4,538.2 L625.1,536.4 L622.3,564.1 L625.5,566.5 L629.4,568.4 L629,581 L625.1,581.5 L621.7,582.6 L622.9,611.1 L626.2,610.6 L630.1,609 L631.5,621.2 L627.8,625.1 L624.8,629 L629.7,654.8 L632.8,651.4 L636.3,646.5 L639.2,656.8 L636.3,663.6 L634,669.9 L642,689.9 L644.5,684 L647.1,676.4 L651.2,683.6 L649.4,692.5 L648.1,700.4 L658.3,712.2 L659.8,704.5 L661.2,695.1 L666.1,698.3 L665.6,708.2 L665.4,716.8 L676.6,718.9 L677,710.4 L677.1,700.4 L682,699.1 L682.9,708.9 L683.9,717.1 L694.7,709.3 L693.9,701 L692.7,691.5 L697.2,686 L699.3,694.5 L701.3,701.3 L710.5,684.6 L708.6,677.4 L706.1,669.6 L709.6,660.6 L712.7,666.7 L715.6,671.3 L721.9,647.6 L719.2,642.5 L715.8,637.3 L717.9,625.8 L721.6,628.8 L724.9,630.6 L727.7,602.9 L724.5,600.5 L720.6,598.6 L721,586 L724.9,585.5 L728.3,584.4 L727.1,555.9 L723.8,556.4 L719.9,558 L718.5,545.8 L722.2,541.9 L725.2,538 L720.3,512.2 L717.2,515.6 L713.7,520.5 L710.8,510.2 L713.7,503.4 L716,497.1 L708,477.1 L705.5,483 L702.9,490.6 L698.8,483.4 L700.6,474.5 L701.9,466.6 L691.7,454.8 L690.2,462.5 L688.8,471.9Z" fill="#5d636a" stroke="#1e2128" stroke-width="1.1" stroke-linejoin="round"/><path d="M674.5,507.5 A29.9,76 0 0 0 674.5,659.5 L693,659.5 A29.9,76 0 0 1 693,507.5 Z" fill="url(#g75)"/><path d="M674.5,507.5 A29.9,76 0 0 0 674.5,659.5" fill="none" stroke="#1e2128" stroke-width="1.1"/><path d="M678.5,509.5 A29.1,74 0 0 0 678.5,657.5" fill="none" stroke="#1e2128" stroke-width="0.9"/><path d="M682.2,510.5 A28.7,73 0 0 0 682.2,656.5" fill="none" stroke="#1e2128" stroke-width="0.8"/><path d="M689,509.5 A29.1,74 0 0 0 689,657.5" fill="none" stroke="#1e2128" stroke-width="0.9"/><path d="M691.5,508.5 A29.5,75 0 0 0 691.5,658.5 L1088,658.5 A29.5,75 0 0 1 1088,508.5 Z" fill="url(#g75)"/><path d="M691.5,508.5 A29.5,75 0 0 0 691.5,658.5" fill="none" stroke="#1e2128" stroke-width="1.1"/><ellipse cx="1088" cy="583.5" rx="29.5" ry="75" fill="#5d636a" stroke="#1e2128" stroke-width="0.9"/><path d="M1089.5,519.5 A25.2,64 0 0 0 1089.5,647.5 L1233.5,647.5 A25.2,64 0 0 1 1233.5,519.5 Z" fill="url(#g64)"/><path d="M1089.5,519.5 A25.2,64 0 0 0 1089.5,647.5" fill="none" stroke="#1e2128" stroke-width="1.1"/><path d="M1111,619 L1178,619 Q1191,622 1190.5,632 Q1190,643 1178,643.5 L1112,643.5 Q1099,640 1099.5,630 Q1100,620 1111,619Z" fill="#6d7582" stroke="#1e2128" stroke-width="0.8"/><path d="M1101,625 Q1108,631 1125,630.5 L1183,630.5 Q1190,632 1190,636 Q1188,643 1178,643 L1112,643 Q1098,639 1101,625Z" fill="#aab8cb" stroke="#1e2128" stroke-width="0.6"/><path d="M1125,630.5 L1123,643 M1183,630.5 L1181,643" stroke="#1e2128" stroke-width="0.6" fill="none"/><ellipse cx="1233.5" cy="583.5" rx="25.2" ry="64" fill="#5d636a" stroke="#1e2128" stroke-width="0.9"/><path d="M1234.5,544.5 A15.3,39 0 0 0 1234.5,622.5 L1258,622.5 A15.3,39 0 0 1 1258,544.5 Z" fill="url(#g39)"/><path d="M1234.5,544.5 A15.3,39 0 0 0 1234.5,622.5" fill="none" stroke="#1e2128" stroke-width="1.1"/><path d="M1255.5,531.5 A20.4,52 0 0 0 1255.5,635.5 L1357.5,635.5 A20.4,52 0 0 1 1357.5,531.5 Z" fill="url(#g52)"/><path d="M1255.5,531.5 A20.4,52 0 0 0 1255.5,635.5" fill="none" stroke="#1e2128" stroke-width="1.1"/><g><path d="M1262,531.5 A20.4,52 0 0 0 1262,635.5" fill="none" stroke="url(#g52b)" stroke-width="4.2"/><path d="M1258.4,531.2 A20.6,52.3 0 0 0 1258.4,635.8" fill="none" stroke="#17191e" stroke-width="1.8"/><path d="M1264.8,531.5 A20.4,52 0 0 0 1264.8,635.5" fill="none" stroke="#4a4f59" stroke-width="0.7"/><path d="M1272.2,531.5 A20.4,52 0 0 0 1272.2,635.5" fill="none" stroke="url(#g52b)" stroke-width="4.2"/><path d="M1268.6,531.2 A20.6,52.3 0 0 0 1268.6,635.8" fill="none" stroke="#17191e" stroke-width="1.8"/><path d="M1275,531.5 A20.4,52 0 0 0 1275,635.5" fill="none" stroke="#4a4f59" stroke-width="0.7"/><path d="M1282.4,531.5 A20.4,52 0 0 0 1282.4,635.5" fill="none" stroke="url(#g52b)" stroke-width="4.2"/><path d="M1278.8,531.2 A20.6,52.3 0 0 0 1278.8,635.8" fill="none" stroke="#17191e" stroke-width="1.8"/><path d="M1285.2,531.5 A20.4,52 0 0 0 1285.2,635.5" fill="none" stroke="#4a4f59" stroke-width="0.7"/><path d="M1292.6,531.5 A20.4,52 0 0 0 1292.6,635.5" fill="none" stroke="url(#g52b)" stroke-width="4.2"/><path d="M1289,531.2 A20.6,52.3 0 0 0 1289,635.8" fill="none" stroke="#17191e" stroke-width="1.8"/><path d="M1295.4,531.5 A20.4,52 0 0 0 1295.4,635.5" fill="none" stroke="#4a4f59" stroke-width="0.7"/><path d="M1302.8,531.5 A20.4,52 0 0 0 1302.8,635.5" fill="none" stroke="url(#g52b)" stroke-width="4.2"/><path d="M1299.2,531.2 A20.6,52.3 0 0 0 1299.2,635.8" fill="none" stroke="#17191e" stroke-width="1.8"/><path d="M1305.6,531.5 A20.4,52 0 0 0 1305.6,635.5" fill="none" stroke="#4a4f59" stroke-width="0.7"/><path d="M1313,531.5 A20.4,52 0 0 0 1313,635.5" fill="none" stroke="url(#g52b)" stroke-width="4.2"/><path d="M1309.4,531.2 A20.6,52.3 0 0 0 1309.4,635.8" fill="none" stroke="#17191e" stroke-width="1.8"/><path d="M1315.8,531.5 A20.4,52 0 0 0 1315.8,635.5" fill="none" stroke="#4a4f59" stroke-width="0.7"/><path d="M1323.2,531.5 A20.4,52 0 0 0 1323.2,635.5" fill="none" stroke="url(#g52b)" stroke-width="4.2"/><path d="M1319.6,531.2 A20.6,52.3 0 0 0 1319.6,635.8" fill="none" stroke="#17191e" stroke-width="1.8"/><path d="M1326,531.5 A20.4,52 0 0 0 1326,635.5" fill="none" stroke="#4a4f59" stroke-width="0.7"/><path d="M1333.4,531.5 A20.4,52 0 0 0 1333.4,635.5" fill="none" stroke="url(#g52b)" stroke-width="4.2"/><path d="M1329.8,531.2 A20.6,52.3 0 0 0 1329.8,635.8" fill="none" stroke="#17191e" stroke-width="1.8"/><path d="M1336.2,531.5 A20.4,52 0 0 0 1336.2,635.5" fill="none" stroke="#4a4f59" stroke-width="0.7"/><path d="M1343.6,531.5 A20.4,52 0 0 0 1343.6,635.5" fill="none" stroke="url(#g52b)" stroke-width="4.2"/><path d="M1340,531.2 A20.6,52.3 0 0 0 1340,635.8" fill="none" stroke="#17191e" stroke-width="1.8"/><path d="M1346.4,531.5 A20.4,52 0 0 0 1346.4,635.5" fill="none" stroke="#4a4f59" stroke-width="0.7"/><path d="M1353.8,531.5 A20.4,52 0 0 0 1353.8,635.5" fill="none" stroke="url(#g52b)" stroke-width="4.2"/><path d="M1350.2,531.2 A20.6,52.3 0 0 0 1350.2,635.8" fill="none" stroke="#17191e" stroke-width="1.8"/><path d="M1356.6,531.5 A20.4,52 0 0 0 1356.6,635.5" fill="none" stroke="#4a4f59" stroke-width="0.7"/></g><path d="M1357.5,531.5 A20.4,52 0 0 0 1357.5,635.5 L1364.6,625 A16.3,41.5 0 0 1 1364.6,542 Z" fill="url(#g52c)"/><path d="M1357.5,531.5 A20.4,52 0 0 0 1357.5,635.5" fill="none" stroke="#1e2128" stroke-width="1.1"/><ellipse cx="1364.6" cy="583.5" rx="16.3" ry="41.5" fill="#5d636a" stroke="#1e2128" stroke-width="0.9"/><path d="M1283,617 l4,-3 l4,4 l6,0 l2,4 l-5,1 l-2,5 l-4,-2 l0,-5 z" fill="#aab4c2" stroke="#3a3f47" stroke-width="0.5"/><path d="M636,684 l5,5 m0,-5 l-5,5 M1316,534 l3.5,3.5 m0,-3.5 l-3.5,3.5 M1295,538 l3.5,3.5 m0,-3.5 l-3.5,3.5" stroke="#a04a62" stroke-width="0.8" stroke-opacity="0.65" fill="none"/><g opacity="0.55"><g fill="none" stroke-width="1"><path d="M364.5,713.5 L441.6,446.5 L1408.6,446.5 L1334.5,713.5 Z" stroke="#88888d"/><path d="M366.5,729.5 L442.5,461.5 L1411.5,461.5 L1337,729.5 Z" stroke="#88888d"/><path d="M451.8,680.5 L357.7,486.5 L1324.5,486.5 M1419.5,680.5 L451.8,680.5" stroke="#7a4e55"/><path d="M663.1,364.9 L758.4,559.2 L680.7,810.7 L585.6,615.6 Z" stroke="#7a4e55"/></g></g><path d="M396,583.5 L1386,583.5" stroke="#564a52" stroke-width="0.9" stroke-opacity="0.9" stroke-dasharray="5,3" fill="none"/><g fill="none" stroke="#a84a60" stroke-width="1.1"><path d="M663.3,564.8 L672.6,583 L664.8,608.3 M672.6,583 L706,583"/></g><path d="M690,581 L697,583 L690,585Z M665,571.5 L668.6,571.8 L667.8,575.8Z M666.3,600 L669.8,600.6 L666.6,604Z" fill="#8e3f55"/><g stroke-width="1.3" fill="none"><path d="M887,587 L880,574" stroke="#3fdc4a"/><path d="M887,587 L882,604" stroke="#3fe0e8"/><path d="M887,587 L908,587" stroke="#f0363c"/></g><circle cx="880" cy="573.5" r="3.2" fill="#3fdc4a"/><rect x="879.5" y="601.5" width="5" height="5" fill="#3fe0e8"/><circle cx="908" cy="587.2" r="2.2" fill="#f0363c"/><text transform="translate(358.4,486) scale(0.74,1)" font-family="Liberation Sans, sans-serif" font-size="14.2" fill="#4f4048" textLength="54.6" lengthAdjust="spacing">FRONT</text><text transform="translate(1411.2,461) scale(0.74,1)" font-family="Liberation Sans, sans-serif" font-size="14.2" fill="#4f4048" textLength="31.4" lengthAdjust="spacing">TOP</text><text transform="translate(682,810.4) scale(0.74,1)" font-family="Liberation Sans, sans-serif" font-size="14.2" fill="#4f4048" textLength="54.1" lengthAdjust="spacing">RIGHT</text><text transform="translate(365.1,713) scale(0.74,1)" font-family="Liberation Sans, sans-serif" font-size="14.2" fill="#4f4048" textLength="43.2" lengthAdjust="spacing">DTM2</text><text transform="translate(366.7,729.3) scale(0.74,1)" font-family="Liberation Sans, sans-serif" font-size="14.2" fill="#4f4048" textLength="57.6" lengthAdjust="spacing">M_DTM</text><text transform="translate(411.8,583.4) scale(0.74,1)" font-family="Liberation Sans, sans-serif" font-size="14.2" fill="#4f4048" textLength="31.1" lengthAdjust="spacing">A_1</text><text transform="translate(675.7,596.7) scale(0.74,1)" font-family="Liberation Sans, sans-serif" font-size="14.2" fill="#4a4d56" textLength="136.9" lengthAdjust="spacing">PRT_CSYS_DEF</text><text transform="translate(707,580.3) scale(0.55,1)" font-family="Liberation Sans, sans-serif" font-size="13.6" fill="#1c1c1c" textLength="8.7" lengthAdjust="spacing">X</text><text transform="translate(654.4,560.2) scale(0.55,1)" font-family="Liberation Sans, sans-serif" font-size="13.6" fill="#1c1c1c" textLength="8.4" lengthAdjust="spacing">Y</text><text transform="translate(656.8,620.6) scale(0.62,1)" font-family="Liberation Sans, sans-serif" font-size="12.6" fill="#1c1c1c" textLength="8.1" lengthAdjust="spacing">Z</text></svg>
<div style="left:1498.5px;top:399.5px;width:39px;height:393px;background:#f3f5f7;border:1px solid #c3c8cf"></div>
<svg style="left:1508px;top:408px" width="20" height="20" viewBox="0 0 20 20"><rect x="0.6" y="0.6" width="17.5" height="17.5" fill="#f3f5f6" stroke="#b9bcbe" stroke-width="1.1"/><defs><radialGradient id="lens13" cx="0.4" cy="0.35" r="0.8"><stop offset="0" stop-color="#f6fcff"/><stop offset="0.6" stop-color="#dff1f9"/><stop offset="1" stop-color="#c7e6f3"/></radialGradient></defs><path d="M13.2,13.4 L18.5,18.8" stroke="#a9a9a9" stroke-width="3.5999999999999996" stroke-linecap="round"/><path d="M13.2,13.4 L18.5,18.8" stroke="#c9c9c9" stroke-width="2.4" stroke-linecap="round"/><path d="M13.2,13.4 L18.5,18.8" stroke="#f2f2f2" stroke-width="1.0" stroke-linecap="round"/><circle cx="9" cy="9" r="5.6" fill="url(#lens13)" stroke="#2f86a8" stroke-width="1.6"/></svg>
<svg style="left:1508px;top:440.5px" width="20" height="20" viewBox="0 0 20 20"><defs><radialGradient id="lens14" cx="0.4" cy="0.35" r="0.8"><stop offset="0" stop-color="#f6fcff"/><stop offset="0.6" stop-color="#dff1f9"/><stop offset="1" stop-color="#c7e6f3"/></radialGradient></defs><path d="M13.0,13.1 L18.6,18.8" stroke="#a9a9a9" stroke-width="3.5999999999999996" stroke-linecap="round"/><path d="M13.0,13.1 L18.6,18.8" stroke="#c9c9c9" stroke-width="2.4" stroke-linecap="round"/><path d="M13.0,13.1 L18.6,18.8" stroke="#f2f2f2" stroke-width="1.0" stroke-linecap="round"/><circle cx="8" cy="8" r="6.6" fill="url(#lens14)" stroke="#2f86a8" stroke-width="1.6"/><path d="M4,8 H12 M8,4 V12" stroke="#1f6a8c" stroke-width="2.2"/></svg>
<svg style="left:1508px;top:473px" width="20" height="20" viewBox="0 0 20 20"><defs><radialGradient id="lens15" cx="0.4" cy="0.35" r="0.8"><stop offset="0" stop-color="#f6fcff"/><stop offset="0.6" stop-color="#dff1f9"/><stop offset="1" stop-color="#c7e6f3"/></radialGradient></defs><path d="M13.0,13.1 L18.6,18.8" stroke="#a9a9a9" stroke-width="3.5999999999999996" stroke-linecap="round"/><path d="M13.0,13.1 L18.6,18.8" stroke="#c9c9c9" stroke-width="2.4" stroke-linecap="round"/><path d="M13.0,13.1 L18.6,18.8" stroke="#f2f2f2" stroke-width="1.0" stroke-linecap="round"/><circle cx="8" cy="8" r="6.6" fill="url(#lens15)" stroke="#2f86a8" stroke-width="1.6"/><path d="M4,8 H12" stroke="#1f6a8c" stroke-width="2.2"/></svg>
<svg style="left:1508px;top:504px" width="20" height="20" viewBox="0 0 20 20"><rect x="0.6" y="0.6" width="18.8" height="18.8" fill="#fdfdfd" stroke="#b5b8ba" stroke-width="1.1"/><rect x="0.6" y="0.4" width="18.8" height="2" fill="#c2c4c6"/><path d="M19,5 V19 H5Z" fill="#63a5bd"/><path d="M19,5 Q12,8 5,19" fill="#a8d2e0"/><path d="M5.5,18 L16.5,7" stroke="#174f68" stroke-width="1.7"/></svg>
<svg style="left:1507.5px;top:535.5px" width="22" height="22" viewBox="0 0 22 22"><defs><radialGradient id="vs116" cx="0.35" cy="0.3" r="0.8"><stop offset="0" stop-color="#fff"/><stop offset="0.6" stop-color="#dcdcdc"/><stop offset="1" stop-color="#8c8c8c"/></radialGradient></defs><circle cx="13.5" cy="6" r="5.6" fill="url(#vs116)"/><circle cx="6.5" cy="12.5" r="6" fill="url(#vs116)"/><path d="M21.5,17 V21.5 H17Z" fill="#6e6e6e"/></svg>
<svg style="left:1507.5px;top:568.5px" width="22" height="22" viewBox="0 0 22 22"><path d="M1,6.5 L6.5,1 H19.5 L14.5,6.5Z" fill="#a7def4" stroke="#226f8e" stroke-width="1.2" stroke-linejoin="round"/><path d="M14.5,6.5 L19.5,1 V14 L14.5,19.5Z" fill="#6bb2d6" stroke="#226f8e" stroke-width="1.2" stroke-linejoin="round"/><rect x="1" y="6.5" width="13.5" height="13" fill="#fff" stroke="#226f8e" stroke-width="1.4"/><path d="M21.5,17.5 V21.5 H17.5Z" fill="#9a5a5a"/></svg>
<svg style="left:1507.5px;top:601px" width="22" height="22" viewBox="0 0 22 22"><path d="M1,5 L5,1 H17.5 L13.5,5Z" fill="#a7def4"/><path d="M13.5,5 L17.5,1 V13.5 L13.5,17.5Z" fill="#6bb2d6"/><rect x="1" y="5" width="12.5" height="12.5" fill="#fff" stroke="#9fc9dc" stroke-width="1"/><rect x="10.5" y="9.5" width="7" height="9" fill="#f4f4f4" stroke="#a2a2a2" stroke-width="0.9"/><path d="M12,12 H16 M12,14.2 H16 M12,16.4 H16" stroke="#8a8a8a" stroke-width="0.8"/><path d="M21.5,17.5 V21.5 H17.5Z" fill="#6e6e6e"/></svg>
<svg style="left:1507.5px;top:634px" width="22" height="22" viewBox="0 0 22 22"><rect x="1" y="0.8" width="15" height="17" fill="#fdfdfd" stroke="#a2a2a2" stroke-width="1"/><path d="M1,4.5 H16 M1,8 H16 M1,11.5 H16 M1,15 H16 M5,4.5 V17.8" stroke="#a9a9a9" stroke-width="0.9"/><path d="M9,12.5 H11.5 L12.5,11 H16.5 L17.5,12.5 H20 Q21,12.5 21,13.5 V20 Q21,21 20,21 H9 Q8,21 8,20 V13.5 Q8,12.5 9,12.5Z" fill="#2e2e2e"/><circle cx="14.5" cy="16.7" r="2.8" fill="#8a8a8a" stroke="#c9c9c9" stroke-width="0.9"/></svg>
<svg style="left:1507.5px;top:665.5px" width="22" height="22" viewBox="0 0 22 22"><path d="M1,5.5 L20.5,1 V13 L16,21 L3,17Z" fill="#9fcfe3" stroke="#5fa3c4" stroke-width="1"/><path d="M8,5 L15.5,3.5 V12 L8,12Z" fill="#e6f2f7" stroke="#8dbdd3" stroke-width="0.7"/><path d="M3,17 L8,12 H15.5 L20.5,13 L16,21Z" fill="#6aaecd"/><path d="M7,14 L12,20" stroke="#c5e3ef" stroke-width="1.6"/></svg>
<svg style="left:1507px;top:698px" width="22" height="22" viewBox="0 0 22 22"><path d="M1.5,1.5 L5.5,5.5 M5.5,1.5 L1.5,5.5" stroke="#8a6f35" stroke-width="1.4"/><path d="M11,1 L8.5,6 M9.5,9 L7,14 M6,17 L4.5,20" stroke="#a3842f" stroke-width="1.7"/><path d="M14,8 V16 H20 M14,16 L10,19.5" fill="none" stroke="#8a6f35" stroke-width="1.3"/><path d="M14,6 L12.4,9 H15.6Z M21.6,16 L19,14.4 V17.6Z" fill="#3f3317"/><path d="M21.5,18 V21.5 H18Z" fill="#6e6e6e"/></svg>
<div style="left:1504.3px;top:728px;width:28.5px;height:28.5px;background:#dcdde0;border:1px solid #bdbfc3"></div>
<svg style="left:1506.5px;top:730.5px" width="24" height="24" viewBox="0 0 24 24"><rect x="1" y="2" width="11.5" height="7" fill="#fffbe2" stroke="#9a9a9a" stroke-width="0.9"/><path d="M12.5,6 H20 L17.5,11.5" fill="none" stroke="#333" stroke-width="1.2"/><path d="M15,9 L20,10 L17,14Z" fill="#222"/><path d="M10.6,19 Q16,13.2 21.4,19 Q16,24.8 10.6,19Z" fill="#1e1e1e"/><circle cx="16" cy="19" r="1.9" fill="#fff"/><circle cx="16" cy="19" r="0.8" fill="#1e1e1e"/></svg>
<div style="left:1504.3px;top:760px;width:28.5px;height:28.5px;background:#dcdde0;border:1px solid #bdbfc3"></div>
<svg style="left:1506.5px;top:762px" width="24" height="24" viewBox="0 0 24 24"><path d="M6,5 L11.5,12 L19.5,12 M11.5,12 L6,19.5" stroke="#2c6c86" stroke-width="1.5" fill="none"/><circle cx="6" cy="5" r="2.8" fill="#58b85a" stroke="#3d8a3f" stroke-width="0.6"/><circle cx="19.5" cy="12" r="2.9" fill="#ee7a78" stroke="#c75553" stroke-width="0.6"/><circle cx="6" cy="19.5" r="2.9" fill="#3a9fd8" stroke="#2a7cb0" stroke-width="0.6"/></svg>
<div style="left:12px;top:994px;width:26px;height:26px;background:#e0e1e3;border:1px solid #b4b6b8"></div>
<svg style="left:19.2px;top:996.3px" width="16" height="22" viewBox="0 0 16 22"><g fill="#fff" stroke="#2e2e2e" stroke-width="1.3"><rect x="2.3" y="1" width="4" height="4"/><rect x="2.3" y="8.7" width="4" height="4"/><rect x="2.3" y="16.2" width="4" height="4"/><rect x="11.2" y="8.7" width="4" height="4"/><path d="M6.3,10.7 H11.2" fill="none"/></g></svg>
<svg style="left:44px;top:996px" width="22" height="22" viewBox="0 0 22 22"><defs><radialGradient id="glb17" cx="0.4" cy="0.35" r="0.75"><stop offset="0" stop-color="#9ad8f7"/><stop offset="0.5" stop-color="#3d9be0"/><stop offset="1" stop-color="#1d6fc0"/></radialGradient></defs><circle cx="11.5" cy="11" r="8.2" fill="url(#glb17)"/><path d="M6,8 Q9,4.5 12.5,6.5 Q11,10 7.5,11Z M13,11 Q17,9.5 18.5,12.5 Q16,17.5 12.5,16Z" fill="#8fd4f6" fill-opacity="0.85"/><ellipse cx="11" cy="11" rx="11.2" ry="5.2" transform="rotate(-38 11 11)" fill="none" stroke="#3b4349" stroke-width="1.1"/><path d="M4.6,15.6 A8.2,8.2 0 0 0 17.6,16.4 L18.8,5.2 A8.2,8.2 0 0 0 8,3.6 Z" fill="url(#glb17)" fill-opacity="0"/></svg>
<svg style="left:75px;top:997px" width="20" height="20" viewBox="0 0 20 20"><defs><linearGradient id="sqg18" x1="0" y1="0" x2="0" y2="1"><stop offset="0" stop-color="#fdfdfd"/><stop offset="0.5" stop-color="#eef2f4"/><stop offset="1" stop-color="#bfe0f2"/></linearGradient></defs><rect x="0.8" y="0.8" width="18.4" height="18.4" rx="1.6" fill="url(#sqg18)" stroke="#3f7a96" stroke-width="1.1"/><path d="M1,18.9 H19 V2" fill="none" stroke="#23566f" stroke-width="1.4"/></svg>
<div class="sep" style="left:108px;top:994px;height:26px;background:#b5b9ba"></div>
<div style="left:115.8px;top:998.7px;width:6.2px;height:6.2px;background:#1f6b8e;border-radius:3.1px"></div>
<div class="t " style="left:128px;top:994.8px;font-size:12.6px;line-height:18px;color:#3a3e41;">显示轴名称标记。</div>
<div class="sep" style="left:1056px;top:988px;height:30px;background:#c9cccd"></div>
<svg style="left:1060px;top:993px" width="20" height="20" viewBox="0 0 20 20"><rect x="1.5" y="9" width="8" height="9" fill="#fff" stroke="#3a9ccb" stroke-width="1.3"/><path d="M8,7.5 L11.5,3.5 L11.5,5.7 Q15,5.2 16,3 Q16.2,8 11.5,8.8 L11.5,11Z" fill="#16607f"/><path d="M19.4,4.8 L16,8.6 L16,6.4 Q13.4,7.2 12.8,9.2 Q12.2,4.2 16,3.4 L16,1.2Z" fill="#16607f" transform="translate(0.4,0.6)"/></svg>
<div class="sep" style="left:1128px;top:988px;height:30px;background:#c9cccd"></div>
<div style="left:1131px;top:990px;width:51px;height:29px;border:1px solid #c5c8ca;background:#f3f5f6"></div>
<div class="sep" style="left:1164px;top:990px;height:29px;background:#c5c8ca"></div>
<svg style="left:1136px;top:995px" width="24" height="19" viewBox="0 0 24 19"><defs><linearGradient id="bng19" x1="0" y1="0" x2="0" y2="1"><stop offset="0" stop-color="#3a3a3a"/><stop offset="0.6" stop-color="#6a6a6a"/><stop offset="1" stop-color="#b5b5b5"/></linearGradient></defs><path d="M4,2 H9 L10.5,7 V17 H1 V10Z" fill="url(#bng19)"/><path d="M20,2 H15 L13.5,7 V17 H23 V10Z" fill="url(#bng19)"/><rect x="10" y="5" width="4" height="6" fill="#4a4a4a"/><rect x="4.5" y="0.5" width="4" height="2" fill="#555"/><rect x="15.5" y="0.5" width="4" height="2" fill="#555"/></svg>
<div style="left:1169.0px;top:1002.5px;width:0;height:0;border-left:4.0px solid transparent;border-right:4.0px solid transparent;border-top:5px solid #6b6f72"></div>
<div style="left:1304px;top:992px;width:216px;height:27px;border:1px solid #a9adaf;background:linear-gradient(180deg,#fbfcfc,#f1f3f3)"></div>
<div class="sep" style="left:1501px;top:992px;height:27px;background:#c5c8ca"></div>
<div class="t " style="left:1313px;top:996.5px;font-size:13px;line-height:18px;color:#555;">几何</div>
<div style="left:1506.5px;top:1002.0px;width:0;height:0;border-left:4.0px solid transparent;border-right:4.0px solid transparent;border-top:5px solid #6b6f72"></div>
<svg style="left:1527px;top:1010px" width="13" height="13" viewBox="0 0 13 13"><path d="M12.5,1 L1,12.5 M12.5,5 L5,12.5 M12.5,9 L9,12.5" stroke="#b4b7b9" stroke-width="1.1"/></svg>
<div id="wm1" style="left:1179.7px;top:956px;font-size:40px;line-height:48px;color:#fff;font-weight:400;text-shadow:1px 1px 0 #000,2px 2px 0 #000,2.5px 2.5px 0.5px #000;white-space:nowrap;">头条</div>
<div id="wm2" style="left:1265.2px;top:957px;font-size:42px;line-height:48px;letter-spacing:0.6px;color:#fff;font-weight:400;text-shadow:1px 1px 0 #000,2px 2px 0 #000,2.5px 2.5px 0.5px #000;white-space:nowrap;">@CAD</div>
<div id="wm3" style="left:1400.3px;top:956px;font-size:40px;line-height:48px;letter-spacing:0.2px;color:#fff;font-weight:400;text-shadow:1px 1px 0 #000,2px 2px 0 #000,2.5px 2.5px 0.5px #000;white-space:nowrap;">钟日铭</div>
</body>
</html>
